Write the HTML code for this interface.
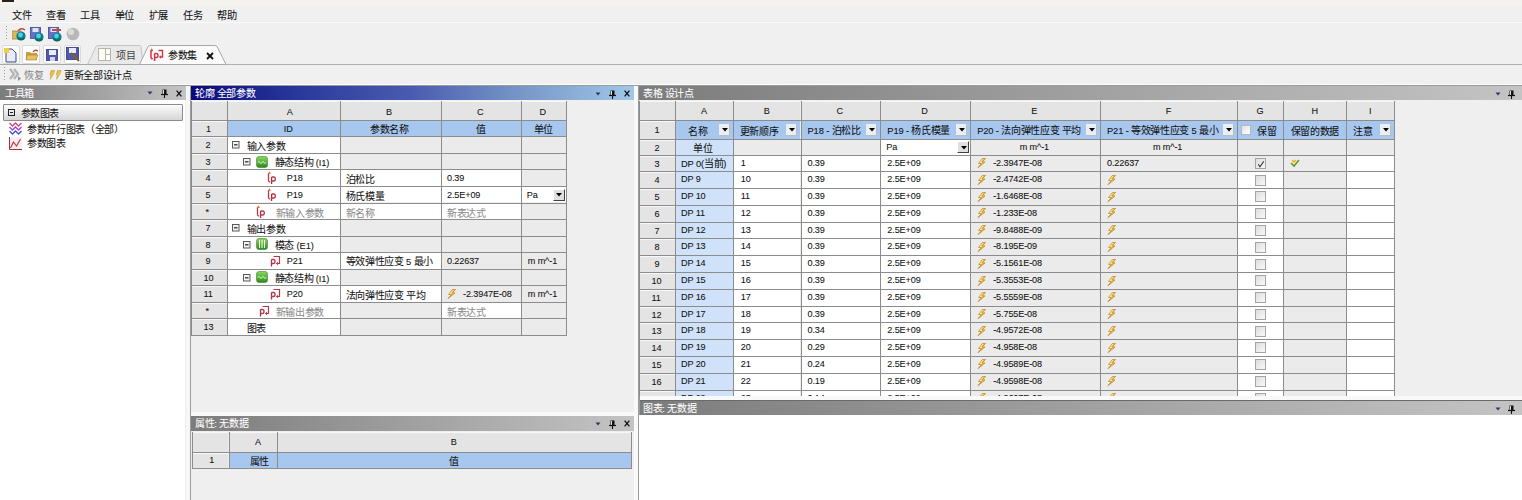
<!DOCTYPE html><html lang="zh-CN"><head><meta charset="utf-8"><style>
*{margin:0;padding:0;box-sizing:border-box}
html,body{width:1522px;height:500px;overflow:hidden}
body{position:relative;background:#f0f0f0;font-family:"Liberation Sans",sans-serif;font-size:9px;color:#111}
div{position:absolute}
.t{white-space:nowrap;line-height:12px;-webkit-text-stroke-width:0.08px}
.tw{-webkit-text-stroke:0}
.cap-a{background:linear-gradient(to right,#0a0a7c 0%,#2a3a9c 25%,#4a5cb0 50%,#7898c8 75%,#a0c8e8 100%)}
.cap-i{background:linear-gradient(to right,#7c7c7c,#c4c4c4)}
.c{overflow:hidden;white-space:nowrap;line-height:16px}
.hd{background:#e4e4e4;box-shadow:inset 0 1px 0 #f8f8f8}
.bl{background:#a7c7ef}
.lb{background:#cfe2f9}
.w{background:#fff}
.g{background:#ebebeb}
.gr{color:#888}
</style></head><body>
<div style="left:0px;top:0px;width:1522px;height:7px;background:linear-gradient(#f6f2ef 60%,#f0f0f0)"></div>
<div style="left:2px;top:0px;width:12px;height:1.6px;background:#2a2218"></div>
<div class="t" style="left:12.0px;top:9px;"><span style="font-size:10.2px;letter-spacing:-0.36px;position:relative;top:1px;-webkit-text-stroke-width:0.05px">文件</span></div>
<div class="t" style="left:46.2px;top:9px;"><span style="font-size:10.2px;letter-spacing:-0.36px;position:relative;top:1px;-webkit-text-stroke-width:0.05px">查看</span></div>
<div class="t" style="left:80.4px;top:9px;"><span style="font-size:10.2px;letter-spacing:-0.36px;position:relative;top:1px;-webkit-text-stroke-width:0.05px">工具</span></div>
<div class="t" style="left:114.60000000000001px;top:9px;"><span style="font-size:10.2px;letter-spacing:-0.36px;position:relative;top:1px;-webkit-text-stroke-width:0.05px">单位</span></div>
<div class="t" style="left:148.8px;top:9px;"><span style="font-size:10.2px;letter-spacing:-0.36px;position:relative;top:1px;-webkit-text-stroke-width:0.05px">扩展</span></div>
<div class="t" style="left:183.0px;top:9px;"><span style="font-size:10.2px;letter-spacing:-0.36px;position:relative;top:1px;-webkit-text-stroke-width:0.05px">任务</span></div>
<div class="t" style="left:217.20000000000002px;top:9px;"><span style="font-size:10.2px;letter-spacing:-0.36px;position:relative;top:1px;-webkit-text-stroke-width:0.05px">帮助</span></div>
<div style="left:0px;top:22px;width:1522px;height:1px;background:#fbfbfb"></div>
<div style="left:5.5px;top:26px;width:1px;height:1px;background:#9a9a9a"></div>
<div style="left:5.5px;top:29px;width:1px;height:1px;background:#9a9a9a"></div>
<div style="left:5.5px;top:32px;width:1px;height:1px;background:#9a9a9a"></div>
<div style="left:5.5px;top:35px;width:1px;height:1px;background:#9a9a9a"></div>
<div style="left:5.5px;top:38px;width:1px;height:1px;background:#9a9a9a"></div>
<svg style="position:absolute;left:12px;top:26.5px;" width="14" height="14" viewBox="0 0 14 14"><rect x="0" y="4" width="9" height="8" fill="#d8b860" stroke="#a08840" stroke-width="0.8"/><path d="M6 4q3-4 7-1" stroke="#c04848" stroke-width="1.5" fill="none"/><circle cx="9" cy="9" r="4.6" fill="#107a98"/><circle cx="8.5" cy="8" r="2.4" fill="#50d0d8"/><path d="M5.5 11.2q3.5 2.5 7 0" stroke="#0a6a3a" stroke-width="1.4" fill="none"/></svg>
<svg style="position:absolute;left:30px;top:27px;" width="14" height="15" viewBox="0 0 14 15"><rect x="0.5" y="0.5" width="10" height="11" fill="#6a70c8" stroke="#404890" stroke-width="0.8"/><rect x="2.5" y="1" width="6" height="4" fill="#e0e4f8"/><circle cx="9" cy="10" r="4.6" fill="#107a98"/><circle cx="8.5" cy="9" r="2.4" fill="#50d0d8"/><path d="M5.5 12.2q3.5 2.5 7 0" stroke="#0a6a3a" stroke-width="1.4" fill="none"/></svg>
<svg style="position:absolute;left:48px;top:27px;" width="14" height="15" viewBox="0 0 14 15"><rect x="0.5" y="0.5" width="10" height="11" fill="#6a70c8" stroke="#404890" stroke-width="0.8"/><rect x="2.5" y="1" width="6" height="4" fill="#e0e4f8"/><path d="M4 3h9" stroke="#c04848" stroke-width="2"/><circle cx="9" cy="10" r="4.6" fill="#107a98"/><circle cx="8.5" cy="9" r="2.4" fill="#50d0d8"/><path d="M5.5 12.2q3.5 2.5 7 0" stroke="#0a6a3a" stroke-width="1.4" fill="none"/></svg>
<svg style="position:absolute;left:66px;top:26.5px;" width="14" height="14" viewBox="0 0 14 14"><circle cx="7" cy="7" r="6.3" fill="#b8b8b8"/><circle cx="5" cy="5" r="3" fill="#dcdcdc"/></svg>
<div style="left:2px;top:44.5px;width:17.5px;height:19px;background:#fdfdfd;border:1px solid #dadada;border-radius:2px"></div>
<div style="left:22px;top:44.5px;width:17.5px;height:19px;background:#fdfdfd;border:1px solid #dadada;border-radius:2px"></div>
<div style="left:43px;top:44.5px;width:17.5px;height:19px;background:#fdfdfd;border:1px solid #dadada;border-radius:2px"></div>
<div style="left:63.6px;top:44.5px;width:17.5px;height:19px;background:#fdfdfd;border:1px solid #dadada;border-radius:2px"></div>
<svg style="position:absolute;left:4px;top:47.5px;" width="13" height="15" viewBox="0 0 13 15"><path d="M2 1h6l4 4v9H2z" fill="#e8ecf8" stroke="#404870" stroke-width="1"/><rect x="0" y="0" width="5" height="5" fill="#f0d040"/></svg>
<svg style="position:absolute;left:25px;top:49px;" width="14" height="12" viewBox="0 0 14 12"><path d="M1 3h4l1 1h6v7H1z" fill="#c8a040"/><path d="M2 6h11l-2 5H1z" fill="#e8c060" stroke="#a08030" stroke-width="0.6"/><path d="M8 3q2-3 5-1" stroke="#c04040" stroke-width="1.3" fill="none"/></svg>
<svg style="position:absolute;left:45.5px;top:48.5px;" width="12" height="12" viewBox="0 0 12 12"><rect x="0.5" y="0.5" width="11" height="11" fill="#5058b0" stroke="#303880" stroke-width="0.8"/><rect x="3" y="1" width="7" height="5" fill="#e8ecff"/><rect x="4" y="8" width="5" height="4" fill="#d0d4f0"/></svg>
<svg style="position:absolute;left:66px;top:47px;" width="14" height="15" viewBox="0 0 14 15"><rect x="0.5" y="0.5" width="12" height="12" fill="#5058b0" stroke="#303880" stroke-width="0.8"/><rect x="3" y="1" width="7" height="5" fill="#e8ecff"/><path d="M5 6l8 8" stroke="#806020" stroke-width="2"/></svg>
<svg style="position:absolute;left:84px;top:44px;" width="150" height="21" viewBox="0 0 150 21"><path d="M3.5 20.5L12 2.5q1-1 3-1H54q2 0 3 1L59 20.5" fill="#e9e9e9" stroke="#c4c4c4" stroke-width="1"/><path d="M55.5 20.5L64 2.5q1-1 3-1H130q2 0 3 1L142 20.5" fill="#fbfbfb" stroke="#a8a8a8" stroke-width="1"/></svg>
<svg style="position:absolute;left:98px;top:48px;" width="13" height="13" viewBox="0 0 13 13"><rect x="0.5" y="0.5" width="12" height="12" fill="#fdfdf8" stroke="#b8b4a8"/><path d="M7.5 0.5v12M7.5 6.5h5" stroke="#b8b4a8"/></svg>
<div class="t" style="left:116px;top:49px;color:#444"><span style="font-size:10px;letter-spacing:-0.35px;position:relative;top:1px;-webkit-text-stroke-width:0.05px">项目</span></div>
<svg style="position:absolute;left:148.5px;top:47.5px;" width="15" height="14" viewBox="0 0 15 14"><path d="M2 2.5V9Q2 10.8 3.8 10.8" stroke="#d03848" stroke-width="1.5" fill="none"/><path d="M2.8 0.3L0.8 3.2h3.6z" fill="#d05040"/><path d="M5.6 5.5V13" stroke="#c83040" stroke-width="1.5"/><path d="M5.6 5.5H7.4Q9 5.5 9 7.5Q9 9.5 7.4 9.5H5.6" stroke="#d03848" stroke-width="1.4" fill="none"/><path d="M9.5 2.5H13.5V9H11.5" stroke="#d03848" stroke-width="1.4" fill="none"/><path d="M12 7.2L9.8 9L12 10.8z" fill="#d03848"/></svg>
<div class="t" style="left:168px;top:49px;"><span style="font-size:10px;letter-spacing:-0.35px;position:relative;top:1px;-webkit-text-stroke-width:0.05px">参数集</span></div>
<svg style="position:absolute;left:206px;top:51.5px;" width="8" height="8" viewBox="0 0 8 8"><path d="M1 1L7 7M7 1L1 7" stroke="#111" stroke-width="1.8"/></svg>
<div style="left:0px;top:64px;width:1522px;height:1px;background:#a8a8a8"></div>
<div style="left:226px;top:63.5px;width:1296px;height:1px;background:#b0b0b0"></div>
<div style="left:3.5px;top:67px;width:1px;height:1px;background:#9a9a9a"></div>
<div style="left:3.5px;top:70px;width:1px;height:1px;background:#9a9a9a"></div>
<div style="left:3.5px;top:73px;width:1px;height:1px;background:#9a9a9a"></div>
<div style="left:3.5px;top:76px;width:1px;height:1px;background:#9a9a9a"></div>
<div style="left:3.5px;top:79px;width:1px;height:1px;background:#9a9a9a"></div>
<svg style="position:absolute;left:9px;top:68px;" width="14" height="14" viewBox="0 0 14 14"><path d="M1 1l4 5l-4 5M5 1l4 5l-4 5" stroke="#b4b4b4" stroke-width="2.2" fill="none"/><path d="M9 8l3 2.5l-3 2.5z" fill="#909090"/></svg>
<div class="t" style="left:24px;top:69px;color:#888"><span style="font-size:10px;letter-spacing:-0.35px;position:relative;top:1px;-webkit-text-stroke-width:0.05px">恢复</span></div>
<svg style="position:absolute;left:49px;top:69.5px;" width="14" height="10" viewBox="0 0 14 10"><path d="M2.2 0.3H5.6L4.2 4.6L1.2 9.3L1.8 4.8L0.9 4.6z" fill="#eec040" stroke="#b89030" stroke-width="0.5"/><path d="M8.6 0.3H12L10.6 4.6L7.6 9.3L8.2 4.8L7.3 4.6z" fill="#eec040" stroke="#b89030" stroke-width="0.5"/></svg>
<div class="t" style="left:64px;top:69px;"><span style="font-size:10px;letter-spacing:-0.35px;position:relative;top:1px;-webkit-text-stroke-width:0.05px">更新全部设计点</span></div>
<div style="left:0px;top:83.6px;width:1522px;height:1.4px;background:#fdfdfd"></div>
<div style="left:0px;top:85px;width:1522px;height:1.4px;background:#9a9a9a"></div>
<div class="cap-i" style="left:0;top:86.4px;width:185.7px;height:14px"></div>
<div class="t" style="left:5px;top:86.5px;color:#fff"><span style="font-size:10px;letter-spacing:-0.35px;position:relative;top:1px;-webkit-text-stroke-width:0.05px">工具箱</span></div>
<svg style="position:absolute;left:147px;top:91.0px;" width="6" height="4" viewBox="0 0 6 4"><path d="M0.5 0.5h5L3 3.5z" fill="#34346a"/></svg>
<svg style="position:absolute;left:161px;top:89.0px;" width="7" height="9" viewBox="0 0 7 9"><path d="M1.5 0.5h4v5h-4z" fill="#111"/><path d="M2.5 1v4" stroke="#fff" stroke-width="0.9"/><path d="M0 5.5h7" stroke="#111" stroke-width="1.2"/><path d="M3.5 6v3" stroke="#111" stroke-width="1.1"/></svg>
<svg style="position:absolute;left:176.4px;top:89.9px;" width="6" height="7" viewBox="0 0 6 7"><path d="M0.6 0.6L5.4 6.4M5.4 0.6L0.6 6.4" stroke="#111" stroke-width="1.3"/></svg>
<div style="left:0px;top:100px;width:185px;height:400px;background:#fff"></div>
<div style="left:185.7px;top:86.4px;width:4.5px;height:415px;background:#f7f7f7"></div>
<div style="left:190.2px;top:86.4px;width:1px;height:415px;background:#9c9c9c"></div>
<div style="left:3px;top:104.4px;width:180px;height:16.4px;background:linear-gradient(#fbfbfb,#d6d6d6);border:1px solid #8c8c8c;border-radius:1px"></div>
<svg style="position:absolute;left:8px;top:109px;" width="7" height="7" viewBox="0 0 7 7"><rect x="0.5" y="0.5" width="6" height="6" fill="none" stroke="#222"/><path d="M2 3.5h3" stroke="#222"/></svg>
<div class="t" style="left:20.5px;top:106.5px;"><span style="font-size:10px;letter-spacing:-0.35px;position:relative;top:1px;-webkit-text-stroke-width:0.05px">参数图表</span></div>
<svg style="position:absolute;left:9px;top:122px;" width="13" height="13" viewBox="0 0 13 13"><path d="M0.5 1l3 3l3-3l3 3l3-3" stroke="#e04070" stroke-width="1.3" fill="none"/><path d="M0.5 5l3 3l3-3l3 3l3-3" stroke="#a040d0" stroke-width="1.3" fill="none"/><path d="M0.5 9l3 3l3-3l3 3l3-3" stroke="#4050d0" stroke-width="1.3" fill="none"/></svg>
<div class="t" style="left:27px;top:122.5px;"><span style="font-size:10px;letter-spacing:-0.35px;position:relative;top:1px;-webkit-text-stroke-width:0.05px">参数并行图表（全部）</span></div>
<svg style="position:absolute;left:9px;top:137px;" width="13" height="13" viewBox="0 0 13 13"><rect x="0" y="0" width="13" height="13" fill="#fbeef0"/><path d="M0.5 0v12.5h12.5" stroke="#a03040" stroke-width="1" fill="none"/><path d="M1.5 11l3-6l3 4l4-7" stroke="#c03040" stroke-width="1.1" fill="none"/></svg>
<div class="t" style="left:27px;top:137px;"><span style="font-size:10px;letter-spacing:-0.35px;position:relative;top:1px;-webkit-text-stroke-width:0.05px">参数图表</span></div>
<div class="cap-a" style="left:191px;top:86.2px;width:442.6px;height:14.2px"></div>
<div class="t" style="left:195px;top:87px;color:#fff"><span style="font-size:10px;letter-spacing:-0.35px;position:relative;top:1px;-webkit-text-stroke-width:0.05px">轮廓</span><span style="font-size:9.3px;letter-spacing:-0.12px;position:relative;top:0px">&nbsp;</span><span style="font-size:10px;letter-spacing:-0.35px;position:relative;top:1px;-webkit-text-stroke-width:0.05px">全部参数</span></div>
<svg style="position:absolute;left:595px;top:91.5px;" width="6" height="4" viewBox="0 0 6 4"><path d="M0.5 0.5h5L3 3.5z" fill="#34346a"/></svg>
<svg style="position:absolute;left:609px;top:89.5px;" width="7" height="9" viewBox="0 0 7 9"><path d="M1.5 0.5h4v5h-4z" fill="#111"/><path d="M2.5 1v4" stroke="#fff" stroke-width="0.9"/><path d="M0 5.5h7" stroke="#111" stroke-width="1.2"/><path d="M3.5 6v3" stroke="#111" stroke-width="1.1"/></svg>
<svg style="position:absolute;left:624.4px;top:90.4px;" width="6" height="7" viewBox="0 0 6 7"><path d="M0.6 0.6L5.4 6.4M5.4 0.6L0.6 6.4" stroke="#111" stroke-width="1.3"/></svg>
<div style="left:191px;top:100.5px;width:443px;height:311.5px;background:#efefef"></div>
<div style="left:633.6px;top:86.4px;width:4.8px;height:415px;background:#f9f9f9"></div>
<div style="left:638.4px;top:86.4px;width:1.2px;height:415px;background:#9c9c9c"></div>
<div style="left:191px;top:412px;width:443px;height:4px;background:#f9f9f9"></div>
<div class="cap-i" style="left:191px;top:416px;width:443px;height:14.5px"></div>
<div class="t" style="left:195px;top:418px;color:#fff"><span style="font-size:10px;letter-spacing:-0.35px;position:relative;top:0px;-webkit-text-stroke-width:0.05px">属性</span><span style="font-size:9.3px;letter-spacing:-0.12px;position:relative;top:0px">: </span><span style="font-size:10px;letter-spacing:-0.35px;position:relative;top:0px;-webkit-text-stroke-width:0.05px">无数据</span></div>
<svg style="position:absolute;left:595px;top:421.5px;" width="6" height="4" viewBox="0 0 6 4"><path d="M0.5 0.5h5L3 3.5z" fill="#34346a"/></svg>
<svg style="position:absolute;left:609px;top:419.5px;" width="7" height="9" viewBox="0 0 7 9"><path d="M1.5 0.5h4v5h-4z" fill="#111"/><path d="M2.5 1v4" stroke="#fff" stroke-width="0.9"/><path d="M0 5.5h7" stroke="#111" stroke-width="1.2"/><path d="M3.5 6v3" stroke="#111" stroke-width="1.1"/></svg>
<svg style="position:absolute;left:624.4px;top:420.4px;" width="6" height="7" viewBox="0 0 6 7"><path d="M0.6 0.6L5.4 6.4M5.4 0.6L0.6 6.4" stroke="#111" stroke-width="1.3"/></svg>
<div style="left:191px;top:430.5px;width:443px;height:70px;background:#efefef"></div>
<div class="cap-i" style="left:639px;top:85.5px;width:883px;height:14.5px"></div>
<div class="t" style="left:643px;top:86.5px;color:#fff"><span style="font-size:10px;letter-spacing:-0.35px;position:relative;top:1px;-webkit-text-stroke-width:0.05px">表格</span><span style="font-size:9.3px;letter-spacing:-0.12px;position:relative;top:0px">&nbsp;</span><span style="font-size:10px;letter-spacing:-0.35px;position:relative;top:1px;-webkit-text-stroke-width:0.05px">设计点</span></div>
<svg style="position:absolute;left:1495px;top:92px;" width="6" height="4" viewBox="0 0 6 4"><path d="M0.5 0.5h5L3 3.5z" fill="#34346a"/></svg>
<svg style="position:absolute;left:1508px;top:89.5px;" width="7" height="9" viewBox="0 0 7 9"><path d="M1.5 0.5h4v5h-4z" fill="#111"/><path d="M2.5 1v4" stroke="#fff" stroke-width="0.9"/><path d="M0 5.5h7" stroke="#111" stroke-width="1.2"/><path d="M3.5 6v3" stroke="#111" stroke-width="1.1"/></svg>
<div style="left:639px;top:100px;width:883px;height:296px;background:#efefef"></div>
<div style="left:639.6px;top:396px;width:883px;height:3.6px;background:#f9f9f9"></div>
<div class="cap-i" style="left:639.6px;top:399.6px;width:883px;height:15.4px;border-top:1px solid #6a6a6a"></div>
<div class="t" style="left:643px;top:402.5px;color:#fff"><span style="font-size:10px;letter-spacing:-0.35px;position:relative;top:0px;-webkit-text-stroke-width:0.05px">图表</span><span style="font-size:9.3px;letter-spacing:-0.12px;position:relative;top:0px">: </span><span style="font-size:10px;letter-spacing:-0.35px;position:relative;top:0px;-webkit-text-stroke-width:0.05px">无数据</span></div>
<svg style="position:absolute;left:1495px;top:407px;" width="6" height="4" viewBox="0 0 6 4"><path d="M0.5 0.5h5L3 3.5z" fill="#34346a"/></svg>
<svg style="position:absolute;left:1508px;top:404.5px;" width="7" height="9" viewBox="0 0 7 9"><path d="M1.5 0.5h4v5h-4z" fill="#111"/><path d="M2.5 1v4" stroke="#fff" stroke-width="0.9"/><path d="M0 5.5h7" stroke="#111" stroke-width="1.2"/><path d="M3.5 6v3" stroke="#111" stroke-width="1.1"/></svg>
<div style="left:639px;top:415px;width:883px;height:85px;background:#fff"></div>
<div class="c hd" style="left:191.50px;top:100.50px;width:35.30px;height:19.40px;"><div class="t" style="left:0px;top:6.5px;"></div></div>
<div class="c hd" style="left:227.80px;top:100.50px;width:111.90px;height:19.40px;"><div class="t" style="left:59px;top:6.5px;"><span style="font-size:9.1px;letter-spacing:-0.12px;position:relative;top:-1px">A</span></div></div>
<div class="c hd" style="left:340.70px;top:100.50px;width:100.30px;height:19.40px;"><div class="t" style="left:45.4px;top:6.5px;"><span style="font-size:9.1px;letter-spacing:-0.12px;position:relative;top:-1px">B</span></div></div>
<div class="c hd" style="left:442.00px;top:100.50px;width:78.80px;height:19.40px;"><div class="t" style="left:35px;top:6.5px;"><span style="font-size:9.1px;letter-spacing:-0.12px;position:relative;top:-1px">C</span></div></div>
<div class="c hd" style="left:521.80px;top:100.50px;width:44.00px;height:19.40px;"><div class="t" style="left:17.6px;top:6.5px;"><span style="font-size:9.1px;letter-spacing:-0.12px;position:relative;top:-1px">D</span></div></div>
<div class="c hd" style="left:191.50px;top:120.90px;width:35.30px;height:15.52px;"><div class="t" style="left:14.5px;top:3px;"><span style="font-size:9.1px;letter-spacing:-0.12px;position:relative;top:-1px">1</span></div></div>
<div class="c bl" style="left:227.80px;top:120.90px;width:111.90px;height:15.52px;"><div class="t" style="left:56px;top:3.5px;"><span style="font-size:9.1px;letter-spacing:-0.12px;position:relative;top:-1px">ID</span></div></div>
<div class="c bl" style="left:340.70px;top:120.90px;width:100.30px;height:15.52px;"><div class="t" style="left:29.5px;top:2.5px;"><span style="font-size:10px;letter-spacing:-0.35px;position:relative;top:1px;-webkit-text-stroke-width:0.05px">参数名称</span></div></div>
<div class="c bl" style="left:442.00px;top:120.90px;width:78.80px;height:15.52px;"><div class="t" style="left:34px;top:2.5px;"><span style="font-size:10px;letter-spacing:-0.35px;position:relative;top:1px;-webkit-text-stroke-width:0.05px">值</span></div></div>
<div class="c bl" style="left:521.80px;top:120.90px;width:44.00px;height:15.52px;"><div class="t" style="left:12px;top:2.5px;"><span style="font-size:10px;letter-spacing:-0.35px;position:relative;top:1px;-webkit-text-stroke-width:0.05px">单位</span></div></div>
<div class="c hd" style="left:191.50px;top:137.42px;width:35.30px;height:15.52px;"><div class="t" style="left:14px;top:3px;"><span style="font-size:9.1px;letter-spacing:-0.12px;position:relative;top:-1px">2</span></div></div>
<div class="c w" style="left:227.80px;top:137.42px;width:111.90px;height:15.52px;"><svg style="position:absolute;left:4px;top:4px" width="8" height="8" viewBox="0 0 8 8"><rect x="0.5" y="0.5" width="6.5" height="6.5" fill="#f4f4f4" stroke="#585858"/><path d="M2 3.8h3.5" stroke="#303030" stroke-width="1.3"/></svg><div class="t" style="left:19px;top:3px;"><span style="font-size:10px;letter-spacing:-0.35px;position:relative;top:1px;-webkit-text-stroke-width:0.05px">输入参数</span></div></div>
<div class="c g" style="left:340.70px;top:137.42px;width:100.30px;height:15.52px;"></div>
<div class="c g" style="left:442.00px;top:137.42px;width:78.80px;height:15.52px;"></div>
<div class="c g" style="left:521.80px;top:137.42px;width:44.00px;height:15.52px;"></div>
<div class="c hd" style="left:191.50px;top:153.94px;width:35.30px;height:15.52px;"><div class="t" style="left:14px;top:3px;"><span style="font-size:9.1px;letter-spacing:-0.12px;position:relative;top:-1px">3</span></div></div>
<div class="c w" style="left:227.80px;top:153.94px;width:111.90px;height:15.52px;"><svg style="position:absolute;left:15px;top:4.3px" width="8" height="8" viewBox="0 0 8 8"><rect x="0.5" y="0.5" width="6.5" height="6.5" fill="#f4f4f4" stroke="#585858"/><path d="M2 3.8h3.5" stroke="#303030" stroke-width="1.3"/></svg><svg style="position:absolute;left:28.5px;top:1.6px" width="12" height="12" viewBox="0 0 12 12"><defs><linearGradient id="gg3" x1="0" y1="0" x2="0" y2="1"><stop offset="0" stop-color="#8ad860"/><stop offset="1" stop-color="#2a8a18"/></linearGradient></defs><rect x="0.5" y="0.5" width="11" height="11" rx="2.5" fill="url(#gg3)" stroke="#3a8a28" stroke-width="0.6"/><path d="M2 6.5q1-2 2 0t2 0t2 0t2 0" stroke="#fff" stroke-width="1" fill="none"/></svg><div class="t" style="left:47px;top:3px;"><span style="font-size:10px;letter-spacing:-0.35px;position:relative;top:0px;-webkit-text-stroke-width:0.05px">静态结构</span><span style="font-size:9.3px;letter-spacing:-0.12px;position:relative;top:0px"> (I1)</span></div></div>
<div class="c g" style="left:340.70px;top:153.94px;width:100.30px;height:15.52px;"></div>
<div class="c g" style="left:442.00px;top:153.94px;width:78.80px;height:15.52px;"></div>
<div class="c g" style="left:521.80px;top:153.94px;width:44.00px;height:15.52px;"></div>
<div class="c hd" style="left:191.50px;top:170.46px;width:35.30px;height:15.52px;"><div class="t" style="left:14px;top:3px;"><span style="font-size:9.1px;letter-spacing:-0.12px;position:relative;top:-1px">4</span></div></div>
<div class="c w" style="left:227.80px;top:170.46px;width:111.90px;height:15.52px;"><svg style="position:absolute;left:39.2px;top:1px" width="10" height="14" viewBox="0 0 10 14"><path d="M1.5 2.5V9.5Q1.5 11 3.2 11" stroke="#b83848" stroke-width="1.3" fill="none"/><path d="M2.5 0.2L0.6 3h3.2z" fill="#e07040"/><path d="M4.6 6V13" stroke="#a83040" stroke-width="1.3"/><path d="M4.6 6H6.6Q8.3 6 8.3 8Q8.3 10 6.6 10H4.6" stroke="#b83848" stroke-width="1.3" fill="none"/></svg><div class="t" style="left:59px;top:3px;"><span style="font-size:9.1px;letter-spacing:-0.12px;position:relative;top:-1px">P18</span></div></div>
<div class="c w" style="left:340.70px;top:170.46px;width:100.30px;height:15.52px;"><div class="t" style="left:5px;top:3px;"><span style="font-size:10px;letter-spacing:-0.35px;position:relative;top:1px;-webkit-text-stroke-width:0.05px">泊松比</span></div></div>
<div class="c w" style="left:442.00px;top:170.46px;width:78.80px;height:15.52px;"><div class="t" style="left:5px;top:3px;"><span style="font-size:9.1px;letter-spacing:-0.12px;position:relative;top:-1px">0.39</span></div></div>
<div class="c g" style="left:521.80px;top:170.46px;width:44.00px;height:15.52px;"></div>
<div class="c hd" style="left:191.50px;top:186.98px;width:35.30px;height:15.52px;"><div class="t" style="left:14px;top:3px;"><span style="font-size:9.1px;letter-spacing:-0.12px;position:relative;top:-1px">5</span></div></div>
<div class="c w" style="left:227.80px;top:186.98px;width:111.90px;height:15.52px;"><svg style="position:absolute;left:39.2px;top:1px" width="10" height="14" viewBox="0 0 10 14"><path d="M1.5 2.5V9.5Q1.5 11 3.2 11" stroke="#b83848" stroke-width="1.3" fill="none"/><path d="M2.5 0.2L0.6 3h3.2z" fill="#e07040"/><path d="M4.6 6V13" stroke="#a83040" stroke-width="1.3"/><path d="M4.6 6H6.6Q8.3 6 8.3 8Q8.3 10 6.6 10H4.6" stroke="#b83848" stroke-width="1.3" fill="none"/></svg><div class="t" style="left:59px;top:3px;"><span style="font-size:9.1px;letter-spacing:-0.12px;position:relative;top:-1px">P19</span></div></div>
<div class="c w" style="left:340.70px;top:186.98px;width:100.30px;height:15.52px;"><div class="t" style="left:5px;top:3px;"><span style="font-size:10px;letter-spacing:-0.35px;position:relative;top:1px;-webkit-text-stroke-width:0.05px">杨氏模量</span></div></div>
<div class="c w" style="left:442.00px;top:186.98px;width:78.80px;height:15.52px;"><div class="t" style="left:5px;top:3px;"><span style="font-size:9.1px;letter-spacing:-0.12px;position:relative;top:-1px">2.5E+09</span></div></div>
<div class="c w" style="left:521.80px;top:186.98px;width:44.00px;height:15.52px;"><div class="t" style="left:5px;top:3px;"><span style="font-size:9.1px;letter-spacing:-0.12px;position:relative;top:-1px">Pa</span></div><div style="right:1px;top:2px;width:12px;height:12px;background:#e0e0e0;border:1px solid #fff;border-right-color:#404040;border-bottom-color:#404040"><svg style="position:absolute;left:2.5px;top:3.5px" width="6" height="4" viewBox="0 0 6 4"><path d="M0 0h6L3 3.5z" fill="#000"/></svg></div></div>
<div class="c hd" style="left:191.50px;top:203.50px;width:35.30px;height:15.52px;"><div class="t" style="left:14px;top:3px;"><span style="font-size:9.1px;letter-spacing:-0.12px;position:relative;top:-1px">*</span></div></div>
<div class="c w" style="left:227.80px;top:203.50px;width:111.90px;height:15.52px;"><svg style="position:absolute;left:28px;top:1px" width="10" height="14" viewBox="0 0 10 14"><path d="M1.5 2.5V9.5Q1.5 11 3.2 11" stroke="#b83848" stroke-width="1.3" fill="none"/><path d="M2.5 0.2L0.6 3h3.2z" fill="#e07040"/><path d="M4.6 6V13" stroke="#a83040" stroke-width="1.3"/><path d="M4.6 6H6.6Q8.3 6 8.3 8Q8.3 10 6.6 10H4.6" stroke="#b83848" stroke-width="1.3" fill="none"/></svg><div class="t" style="left:48px;top:3px;color:#8a8a8a"><span style="font-size:10px;letter-spacing:-0.35px;position:relative;top:1px;-webkit-text-stroke-width:0.05px">新输入参数</span></div></div>
<div class="c w" style="left:340.70px;top:203.50px;width:100.30px;height:15.52px;"><div class="t" style="left:5px;top:3px;color:#8a8a8a"><span style="font-size:10px;letter-spacing:-0.35px;position:relative;top:1px;-webkit-text-stroke-width:0.05px">新名称</span></div></div>
<div class="c w" style="left:442.00px;top:203.50px;width:78.80px;height:15.52px;"><div class="t" style="left:5px;top:3px;color:#8a8a8a"><span style="font-size:10px;letter-spacing:-0.35px;position:relative;top:1px;-webkit-text-stroke-width:0.05px">新表达式</span></div></div>
<div class="c g" style="left:521.80px;top:203.50px;width:44.00px;height:15.52px;"></div>
<div class="c hd" style="left:191.50px;top:220.02px;width:35.30px;height:15.52px;"><div class="t" style="left:14px;top:3px;"><span style="font-size:9.1px;letter-spacing:-0.12px;position:relative;top:-1px">7</span></div></div>
<div class="c w" style="left:227.80px;top:220.02px;width:111.90px;height:15.52px;"><svg style="position:absolute;left:4px;top:4px" width="8" height="8" viewBox="0 0 8 8"><rect x="0.5" y="0.5" width="6.5" height="6.5" fill="#f4f4f4" stroke="#585858"/><path d="M2 3.8h3.5" stroke="#303030" stroke-width="1.3"/></svg><div class="t" style="left:19px;top:3px;"><span style="font-size:10px;letter-spacing:-0.35px;position:relative;top:1px;-webkit-text-stroke-width:0.05px">输出参数</span></div></div>
<div class="c g" style="left:340.70px;top:220.02px;width:100.30px;height:15.52px;"></div>
<div class="c g" style="left:442.00px;top:220.02px;width:78.80px;height:15.52px;"></div>
<div class="c g" style="left:521.80px;top:220.02px;width:44.00px;height:15.52px;"></div>
<div class="c hd" style="left:191.50px;top:236.54px;width:35.30px;height:15.52px;"><div class="t" style="left:14px;top:3px;"><span style="font-size:9.1px;letter-spacing:-0.12px;position:relative;top:-1px">8</span></div></div>
<div class="c w" style="left:227.80px;top:236.54px;width:111.90px;height:15.52px;"><svg style="position:absolute;left:15px;top:4.3px" width="8" height="8" viewBox="0 0 8 8"><rect x="0.5" y="0.5" width="6.5" height="6.5" fill="#f4f4f4" stroke="#585858"/><path d="M2 3.8h3.5" stroke="#303030" stroke-width="1.3"/></svg><svg style="position:absolute;left:28.5px;top:1.6px" width="12" height="12" viewBox="0 0 12 12"><defs><linearGradient id="gg9" x1="0" y1="0" x2="0" y2="1"><stop offset="0" stop-color="#8ad860"/><stop offset="1" stop-color="#2a8a18"/></linearGradient></defs><rect x="0.5" y="0.5" width="11" height="11" rx="2.5" fill="url(#gg9)" stroke="#3a8a28" stroke-width="0.6"/><path d="M3.5 2v8M6 2v8M8.5 2v8" stroke="#fff" stroke-width="1" fill="none"/></svg><div class="t" style="left:47px;top:3px;"><span style="font-size:10px;letter-spacing:-0.35px;position:relative;top:0px;-webkit-text-stroke-width:0.05px">模态</span><span style="font-size:9.3px;letter-spacing:-0.12px;position:relative;top:0px"> (E1)</span></div></div>
<div class="c g" style="left:340.70px;top:236.54px;width:100.30px;height:15.52px;"></div>
<div class="c g" style="left:442.00px;top:236.54px;width:78.80px;height:15.52px;"></div>
<div class="c g" style="left:521.80px;top:236.54px;width:44.00px;height:15.52px;"></div>
<div class="c hd" style="left:191.50px;top:253.06px;width:35.30px;height:15.52px;"><div class="t" style="left:14px;top:3px;"><span style="font-size:9.1px;letter-spacing:-0.12px;position:relative;top:-1px">9</span></div></div>
<div class="c w" style="left:227.80px;top:253.06px;width:111.90px;height:15.52px;"><svg style="position:absolute;left:42.2px;top:2px" width="11" height="12" viewBox="0 0 11 12"><path d="M1.5 4.5V11.5" stroke="#a83040" stroke-width="1.3"/><path d="M1.5 4.5H3.4Q5 4.5 5 6.5Q5 8.5 3.4 8.5H1.5" stroke="#b83848" stroke-width="1.3" fill="none"/><path d="M3.5 1.5H9.5V8.5H7.5" stroke="#b83848" stroke-width="1.2" fill="none"/><path d="M8 6.8L5.8 8.5L8 10.2z" fill="#b83848"/></svg><div class="t" style="left:59px;top:3px;"><span style="font-size:9.1px;letter-spacing:-0.12px;position:relative;top:-1px">P21</span></div></div>
<div class="c w" style="left:340.70px;top:253.06px;width:100.30px;height:15.52px;"><div class="t" style="left:5px;top:3px;"><span style="font-size:10px;letter-spacing:-0.35px;position:relative;top:0px;-webkit-text-stroke-width:0.05px">等效弹性应变</span><span style="font-size:9.3px;letter-spacing:-0.12px;position:relative;top:0px"> 5 </span><span style="font-size:10px;letter-spacing:-0.35px;position:relative;top:0px;-webkit-text-stroke-width:0.05px">最小</span></div></div>
<div class="c g" style="left:442.00px;top:253.06px;width:78.80px;height:15.52px;"><div class="t" style="left:5px;top:3px;"><span style="font-size:9.1px;letter-spacing:-0.12px;position:relative;top:-1px">0.22637</span></div></div>
<div class="c g" style="left:521.80px;top:253.06px;width:44.00px;height:15.52px;"><div class="t" style="left:6px;top:3px;"><span style="font-size:9.1px;letter-spacing:-0.12px;position:relative;top:-1px">m m^-1</span></div></div>
<div class="c hd" style="left:191.50px;top:269.58px;width:35.30px;height:15.52px;"><div class="t" style="left:12px;top:3px;"><span style="font-size:9.1px;letter-spacing:-0.12px;position:relative;top:-1px">10</span></div></div>
<div class="c w" style="left:227.80px;top:269.58px;width:111.90px;height:15.52px;"><svg style="position:absolute;left:15px;top:4.3px" width="8" height="8" viewBox="0 0 8 8"><rect x="0.5" y="0.5" width="6.5" height="6.5" fill="#f4f4f4" stroke="#585858"/><path d="M2 3.8h3.5" stroke="#303030" stroke-width="1.3"/></svg><svg style="position:absolute;left:28.5px;top:1.6px" width="12" height="12" viewBox="0 0 12 12"><defs><linearGradient id="gg12" x1="0" y1="0" x2="0" y2="1"><stop offset="0" stop-color="#8ad860"/><stop offset="1" stop-color="#2a8a18"/></linearGradient></defs><rect x="0.5" y="0.5" width="11" height="11" rx="2.5" fill="url(#gg12)" stroke="#3a8a28" stroke-width="0.6"/><path d="M2 6.5q1-2 2 0t2 0t2 0t2 0" stroke="#fff" stroke-width="1" fill="none"/></svg><div class="t" style="left:47px;top:3px;"><span style="font-size:10px;letter-spacing:-0.35px;position:relative;top:0px;-webkit-text-stroke-width:0.05px">静态结构</span><span style="font-size:9.3px;letter-spacing:-0.12px;position:relative;top:0px"> (I1)</span></div></div>
<div class="c g" style="left:340.70px;top:269.58px;width:100.30px;height:15.52px;"></div>
<div class="c g" style="left:442.00px;top:269.58px;width:78.80px;height:15.52px;"></div>
<div class="c g" style="left:521.80px;top:269.58px;width:44.00px;height:15.52px;"></div>
<div class="c hd" style="left:191.50px;top:286.10px;width:35.30px;height:15.52px;"><div class="t" style="left:12px;top:3px;"><span style="font-size:9.1px;letter-spacing:-0.12px;position:relative;top:-1px">11</span></div></div>
<div class="c w" style="left:227.80px;top:286.10px;width:111.90px;height:15.52px;"><svg style="position:absolute;left:42.2px;top:2px" width="11" height="12" viewBox="0 0 11 12"><path d="M1.5 4.5V11.5" stroke="#a83040" stroke-width="1.3"/><path d="M1.5 4.5H3.4Q5 4.5 5 6.5Q5 8.5 3.4 8.5H1.5" stroke="#b83848" stroke-width="1.3" fill="none"/><path d="M3.5 1.5H9.5V8.5H7.5" stroke="#b83848" stroke-width="1.2" fill="none"/><path d="M8 6.8L5.8 8.5L8 10.2z" fill="#b83848"/></svg><div class="t" style="left:59px;top:3px;"><span style="font-size:9.1px;letter-spacing:-0.12px;position:relative;top:-1px">P20</span></div></div>
<div class="c w" style="left:340.70px;top:286.10px;width:100.30px;height:15.52px;"><div class="t" style="left:5px;top:3px;"><span style="font-size:10px;letter-spacing:-0.35px;position:relative;top:1px;-webkit-text-stroke-width:0.05px">法向弹性应变</span><span style="font-size:9.3px;letter-spacing:-0.12px;position:relative;top:0px">&nbsp;</span><span style="font-size:10px;letter-spacing:-0.35px;position:relative;top:1px;-webkit-text-stroke-width:0.05px">平均</span></div></div>
<div class="c g" style="left:442.00px;top:286.10px;width:78.80px;height:15.52px;"><svg style="position:absolute;left:5px;top:2.5px" width="10" height="10" viewBox="0 0 10 10"><path d="M5.5 0.4L1.6 5.4h2.8L1 9.7l7-5.8H5.3L8.6 0.4z" fill="#f4c040" stroke="#b88020" stroke-width="0.7" stroke-linejoin="round"/><path d="M5.8 1.2L3 4.6h2" stroke="#fff0a0" stroke-width="0.8" fill="none"/></svg><div class="t" style="left:21px;top:3px;"><span style="font-size:9.1px;letter-spacing:-0.12px;position:relative;top:-1px">-2.3947E-08</span></div></div>
<div class="c g" style="left:521.80px;top:286.10px;width:44.00px;height:15.52px;"><div class="t" style="left:6px;top:3px;"><span style="font-size:9.1px;letter-spacing:-0.12px;position:relative;top:-1px">m m^-1</span></div></div>
<div class="c hd" style="left:191.50px;top:302.62px;width:35.30px;height:15.52px;"><div class="t" style="left:14px;top:3px;"><span style="font-size:9.1px;letter-spacing:-0.12px;position:relative;top:-1px">*</span></div></div>
<div class="c w" style="left:227.80px;top:302.62px;width:111.90px;height:15.52px;"><svg style="position:absolute;left:31px;top:2px" width="11" height="12" viewBox="0 0 11 12"><path d="M1.5 4.5V11.5" stroke="#a83040" stroke-width="1.3"/><path d="M1.5 4.5H3.4Q5 4.5 5 6.5Q5 8.5 3.4 8.5H1.5" stroke="#b83848" stroke-width="1.3" fill="none"/><path d="M3.5 1.5H9.5V8.5H7.5" stroke="#b83848" stroke-width="1.2" fill="none"/><path d="M8 6.8L5.8 8.5L8 10.2z" fill="#b83848"/></svg><div class="t" style="left:48px;top:3px;color:#8a8a8a"><span style="font-size:10px;letter-spacing:-0.35px;position:relative;top:1px;-webkit-text-stroke-width:0.05px">新输出参数</span></div></div>
<div class="c g" style="left:340.70px;top:302.62px;width:100.30px;height:15.52px;"></div>
<div class="c w" style="left:442.00px;top:302.62px;width:78.80px;height:15.52px;"><div class="t" style="left:5px;top:3px;color:#8a8a8a"><span style="font-size:10px;letter-spacing:-0.35px;position:relative;top:1px;-webkit-text-stroke-width:0.05px">新表达式</span></div></div>
<div class="c g" style="left:521.80px;top:302.62px;width:44.00px;height:15.52px;"></div>
<div class="c hd" style="left:191.50px;top:319.14px;width:35.30px;height:15.52px;"><div class="t" style="left:12px;top:3px;"><span style="font-size:9.1px;letter-spacing:-0.12px;position:relative;top:-1px">13</span></div></div>
<div class="c w" style="left:227.80px;top:319.14px;width:111.90px;height:15.52px;"><div class="t" style="left:19px;top:3px;"><span style="font-size:10px;letter-spacing:-0.35px;position:relative;top:1px;-webkit-text-stroke-width:0.05px">图表</span></div></div>
<div class="c g" style="left:340.70px;top:319.14px;width:100.30px;height:15.52px;"></div>
<div class="c g" style="left:442.00px;top:319.14px;width:78.80px;height:15.52px;"></div>
<div class="c g" style="left:521.80px;top:319.14px;width:44.00px;height:15.52px;"></div>
<div style="left:190.50px;top:100.50px;width:1px;height:235.16px;background:#8c8c8c"></div>
<div style="left:226.80px;top:100.50px;width:1px;height:235.16px;background:#8c8c8c"></div>
<div style="left:339.70px;top:100.50px;width:1px;height:235.16px;background:#8c8c8c"></div>
<div style="left:441.00px;top:100.50px;width:1px;height:235.16px;background:#8c8c8c"></div>
<div style="left:520.80px;top:100.50px;width:1px;height:235.16px;background:#8c8c8c"></div>
<div style="left:565.80px;top:100.50px;width:1px;height:235.16px;background:#8c8c8c"></div>
<div style="left:190.50px;top:119.90px;width:376.30px;height:1px;background:#8c8c8c"></div>
<div style="left:190.50px;top:136.42px;width:376.30px;height:1px;background:#8c8c8c"></div>
<div style="left:190.50px;top:152.94px;width:376.30px;height:1px;background:#8c8c8c"></div>
<div style="left:190.50px;top:169.46px;width:376.30px;height:1px;background:#8c8c8c"></div>
<div style="left:190.50px;top:185.98px;width:376.30px;height:1px;background:#8c8c8c"></div>
<div style="left:190.50px;top:202.50px;width:376.30px;height:1px;background:#8c8c8c"></div>
<div style="left:190.50px;top:219.02px;width:376.30px;height:1px;background:#8c8c8c"></div>
<div style="left:190.50px;top:235.54px;width:376.30px;height:1px;background:#8c8c8c"></div>
<div style="left:190.50px;top:252.06px;width:376.30px;height:1px;background:#8c8c8c"></div>
<div style="left:190.50px;top:268.58px;width:376.30px;height:1px;background:#8c8c8c"></div>
<div style="left:190.50px;top:285.10px;width:376.30px;height:1px;background:#8c8c8c"></div>
<div style="left:190.50px;top:301.62px;width:376.30px;height:1px;background:#8c8c8c"></div>
<div style="left:190.50px;top:318.14px;width:376.30px;height:1px;background:#8c8c8c"></div>
<div style="left:190.50px;top:334.66px;width:376.30px;height:1px;background:#8c8c8c"></div>
<div class="c hd" style="left:193.30px;top:431.50px;width:35.20px;height:20.50px;"></div>
<div class="c hd" style="left:229.50px;top:431.50px;width:47.30px;height:20.50px;"><div class="t" style="left:25.5px;top:5.5px;"><span style="font-size:9.1px;letter-spacing:-0.12px;position:relative;top:-1px">A</span></div></div>
<div class="c hd" style="left:277.80px;top:431.50px;width:353.00px;height:20.50px;"><div class="t" style="left:173px;top:5.5px;"><span style="font-size:9.1px;letter-spacing:-0.12px;position:relative;top:-1px">B</span></div></div>
<div class="c hd" style="left:193.30px;top:453.00px;width:35.20px;height:14.50px;"><div class="t" style="left:16px;top:2px;"><span style="font-size:9.1px;letter-spacing:-0.12px;position:relative;top:-1px">1</span></div></div>
<div class="c bl" style="left:229.50px;top:453.00px;width:47.30px;height:14.50px;"><div class="t" style="left:20px;top:1.5px;"><span style="font-size:10px;letter-spacing:-0.35px;position:relative;top:1px;-webkit-text-stroke-width:0.05px">属性</span></div></div>
<div class="c bl" style="left:277.80px;top:453.00px;width:353.00px;height:14.50px;"><div class="t" style="left:171px;top:1.5px;"><span style="font-size:10px;letter-spacing:-0.35px;position:relative;top:1px;-webkit-text-stroke-width:0.05px">值</span></div></div>
<div style="left:192.30px;top:431.50px;width:1px;height:37.00px;background:#8c8c8c"></div>
<div style="left:228.50px;top:431.50px;width:1px;height:37.00px;background:#8c8c8c"></div>
<div style="left:276.80px;top:431.50px;width:1px;height:37.00px;background:#8c8c8c"></div>
<div style="left:630.80px;top:431.50px;width:1px;height:37.00px;background:#8c8c8c"></div>
<div style="left:192.30px;top:452.00px;width:439.50px;height:1px;background:#8c8c8c"></div>
<div style="left:192.30px;top:467.50px;width:439.50px;height:1px;background:#8c8c8c"></div>
<div style="left:638px;top:100px;width:884px;height:296.2px;overflow:hidden">
<div class="c hd" style="left:1.50px;top:0.50px;width:35.50px;height:19.40px;"><div class="t" style="left:0px;top:5.5px;"></div></div>
<div class="c hd" style="left:38.00px;top:0.50px;width:56.80px;height:19.40px;"><div class="t" style="left:25px;top:5.5px;"><span style="font-size:9.1px;letter-spacing:-0.12px;position:relative;top:-1px">A</span></div></div>
<div class="c hd" style="left:95.80px;top:0.50px;width:66.70px;height:19.40px;"><div class="t" style="left:30px;top:5.5px;"><span style="font-size:9.1px;letter-spacing:-0.12px;position:relative;top:-1px">B</span></div></div>
<div class="c hd" style="left:163.50px;top:0.50px;width:78.80px;height:19.40px;"><div class="t" style="left:35px;top:5.5px;"><span style="font-size:9.1px;letter-spacing:-0.12px;position:relative;top:-1px">C</span></div></div>
<div class="c hd" style="left:243.30px;top:0.50px;width:88.90px;height:19.40px;"><div class="t" style="left:40px;top:5.5px;"><span style="font-size:9.1px;letter-spacing:-0.12px;position:relative;top:-1px">D</span></div></div>
<div class="c hd" style="left:333.20px;top:0.50px;width:128.80px;height:19.40px;"><div class="t" style="left:60px;top:5.5px;"><span style="font-size:9.1px;letter-spacing:-0.12px;position:relative;top:-1px">E</span></div></div>
<div class="c hd" style="left:463.00px;top:0.50px;width:136.10px;height:19.40px;"><div class="t" style="left:64.8px;top:5.5px;"><span style="font-size:9.1px;letter-spacing:-0.12px;position:relative;top:-1px">F</span></div></div>
<div class="c hd" style="left:600.10px;top:0.50px;width:44.70px;height:19.40px;"><div class="t" style="left:18.4px;top:5.5px;"><span style="font-size:9.1px;letter-spacing:-0.12px;position:relative;top:-1px">G</span></div></div>
<div class="c hd" style="left:645.80px;top:0.50px;width:62.30px;height:19.40px;"><div class="t" style="left:27.8px;top:5.5px;"><span style="font-size:9.1px;letter-spacing:-0.12px;position:relative;top:-1px">H</span></div></div>
<div class="c hd" style="left:709.10px;top:0.50px;width:47.10px;height:19.40px;"><div class="t" style="left:21.8px;top:5.5px;"><span style="font-size:9.1px;letter-spacing:-0.12px;position:relative;top:-1px">I</span></div></div>
<div class="c hd" style="left:1.50px;top:20.90px;width:35.50px;height:18.20px;"><div class="t" style="left:15px;top:4.5px;"><span style="font-size:9.1px;letter-spacing:-0.12px;position:relative;top:-1px">1</span></div></div>
<div class="c bl" style="left:38.00px;top:20.90px;width:56.80px;height:18.20px;"><div class="t" style="left:12px;top:4px;"><span style="font-size:10px;letter-spacing:-0.35px;position:relative;top:1px;-webkit-text-stroke-width:0.05px">名称</span></div><div style="right:3px;top:3.5px;width:11px;height:11.5px;background:#eceef2;box-shadow:inset -1px -1px 0 #b8bcc4"><svg style="position:absolute;left:3px;top:4px" width="6" height="4" viewBox="0 0 6 4"><path d="M0 0h6L3 3.5z" fill="#000"/></svg></div></div>
<div class="c bl" style="left:95.80px;top:20.90px;width:66.70px;height:18.20px;"><div class="t" style="left:6px;top:4px;"><span style="font-size:10px;letter-spacing:-0.35px;position:relative;top:1px;-webkit-text-stroke-width:0.05px">更新顺序</span></div><div style="right:3px;top:3.5px;width:11px;height:11.5px;background:#eceef2;box-shadow:inset -1px -1px 0 #b8bcc4"><svg style="position:absolute;left:3px;top:4px" width="6" height="4" viewBox="0 0 6 4"><path d="M0 0h6L3 3.5z" fill="#000"/></svg></div></div>
<div class="c bl" style="left:163.50px;top:20.90px;width:78.80px;height:18.20px;"><div class="t" style="left:6px;top:4px;"><span style="font-size:9.3px;letter-spacing:-0.12px;position:relative;top:0px">P18 - </span><span style="font-size:10px;letter-spacing:-0.35px;position:relative;top:0px;-webkit-text-stroke-width:0.05px">泊松比</span></div><div style="right:3px;top:3.5px;width:11px;height:11.5px;background:#eceef2;box-shadow:inset -1px -1px 0 #b8bcc4"><svg style="position:absolute;left:3px;top:4px" width="6" height="4" viewBox="0 0 6 4"><path d="M0 0h6L3 3.5z" fill="#000"/></svg></div></div>
<div class="c bl" style="left:243.30px;top:20.90px;width:88.90px;height:18.20px;"><div class="t" style="left:6px;top:4px;"><span style="font-size:9.3px;letter-spacing:-0.12px;position:relative;top:0px">P19 - </span><span style="font-size:10px;letter-spacing:-0.35px;position:relative;top:0px;-webkit-text-stroke-width:0.05px">杨氏模量</span></div><div style="right:3px;top:3.5px;width:11px;height:11.5px;background:#eceef2;box-shadow:inset -1px -1px 0 #b8bcc4"><svg style="position:absolute;left:3px;top:4px" width="6" height="4" viewBox="0 0 6 4"><path d="M0 0h6L3 3.5z" fill="#000"/></svg></div></div>
<div class="c bl" style="left:333.20px;top:20.90px;width:128.80px;height:18.20px;"><div class="t" style="left:6px;top:4px;"><span style="font-size:9.3px;letter-spacing:-0.12px;position:relative;top:0px">P20 - </span><span style="font-size:10px;letter-spacing:-0.35px;position:relative;top:0px;-webkit-text-stroke-width:0.05px">法向弹性应变</span><span style="font-size:9.3px;letter-spacing:-0.12px;position:relative;top:0px">&nbsp;</span><span style="font-size:10px;letter-spacing:-0.35px;position:relative;top:0px;-webkit-text-stroke-width:0.05px">平均</span></div><div style="right:3px;top:3.5px;width:11px;height:11.5px;background:#eceef2;box-shadow:inset -1px -1px 0 #b8bcc4"><svg style="position:absolute;left:3px;top:4px" width="6" height="4" viewBox="0 0 6 4"><path d="M0 0h6L3 3.5z" fill="#000"/></svg></div></div>
<div class="c bl" style="left:463.00px;top:20.90px;width:136.10px;height:18.20px;"><div class="t" style="left:6px;top:4px;"><span style="font-size:9.3px;letter-spacing:-0.12px;position:relative;top:0px">P21 - </span><span style="font-size:10px;letter-spacing:-0.35px;position:relative;top:0px;-webkit-text-stroke-width:0.05px">等效弹性应变</span><span style="font-size:9.3px;letter-spacing:-0.12px;position:relative;top:0px"> 5 </span><span style="font-size:10px;letter-spacing:-0.35px;position:relative;top:0px;-webkit-text-stroke-width:0.05px">最小</span></div><div style="right:3px;top:3.5px;width:11px;height:11.5px;background:#eceef2;box-shadow:inset -1px -1px 0 #b8bcc4"><svg style="position:absolute;left:3px;top:4px" width="6" height="4" viewBox="0 0 6 4"><path d="M0 0h6L3 3.5z" fill="#000"/></svg></div></div>
<div class="c bl" style="left:600.10px;top:20.90px;width:44.70px;height:18.20px;"><div class="t" style="left:18.8px;top:4px;"><span style="font-size:10px;letter-spacing:-0.35px;position:relative;top:1px;-webkit-text-stroke-width:0.05px">保留</span></div><div style="left:3px;top:4px;width:10px;height:10px;border:1px solid #b0b8c8;background:linear-gradient(135deg,#e8e0d8,#fff)"></div></div>
<div class="c bl" style="left:645.80px;top:20.90px;width:62.30px;height:18.20px;"><div class="t" style="left:6.8px;top:4px;"><span style="font-size:10px;letter-spacing:-0.35px;position:relative;top:1px;-webkit-text-stroke-width:0.05px">保留的数据</span></div></div>
<div class="c bl" style="left:709.10px;top:20.90px;width:47.10px;height:18.20px;"><div class="t" style="left:6px;top:4px;"><span style="font-size:10px;letter-spacing:-0.35px;position:relative;top:1px;-webkit-text-stroke-width:0.05px">注意</span></div><div style="right:3px;top:3.5px;width:11px;height:11.5px;background:#eceef2;box-shadow:inset -1px -1px 0 #b8bcc4"><svg style="position:absolute;left:3px;top:4px" width="6" height="4" viewBox="0 0 6 4"><path d="M0 0h6L3 3.5z" fill="#000"/></svg></div></div>
<div class="c hd" style="left:1.50px;top:40.10px;width:35.50px;height:14.80px;"><div class="t" style="left:15px;top:3px;"><span style="font-size:9.1px;letter-spacing:-0.12px;position:relative;top:-1px">2</span></div></div>
<div class="c lb" style="left:38.00px;top:40.10px;width:56.80px;height:14.80px;"><div class="t" style="left:17px;top:2px;"><span style="font-size:10px;letter-spacing:-0.35px;position:relative;top:1px;-webkit-text-stroke-width:0.05px">单位</span></div></div>
<div class="c g" style="left:95.80px;top:40.10px;width:66.70px;height:14.80px;"></div>
<div class="c g" style="left:163.50px;top:40.10px;width:78.80px;height:14.80px;"></div>
<div class="c w" style="left:243.30px;top:40.10px;width:88.90px;height:14.80px;"><div class="t" style="left:5px;top:2px;"><span style="font-size:9.1px;letter-spacing:-0.12px;position:relative;top:-1px">Pa</span></div><div style="right:1px;top:1px;width:12px;height:12px;background:#e0e0e0;border:1px solid #fff;border-right-color:#404040;border-bottom-color:#404040"><svg style="position:absolute;left:2.5px;top:3.5px" width="6" height="4" viewBox="0 0 6 4"><path d="M0 0h6L3 3.5z" fill="#000"/></svg></div></div>
<div class="c g" style="left:333.20px;top:40.10px;width:128.80px;height:14.80px;"><div class="t" style="left:48.5px;top:2px;letter-spacing:0.15px"><span style="font-size:9.1px;letter-spacing:-0.12px;position:relative;top:-1px">m m^-1</span></div></div>
<div class="c g" style="left:463.00px;top:40.10px;width:136.10px;height:14.80px;"><div class="t" style="left:52px;top:2px;letter-spacing:0.15px"><span style="font-size:9.1px;letter-spacing:-0.12px;position:relative;top:-1px">m m^-1</span></div></div>
<div class="c g" style="left:600.10px;top:40.10px;width:44.70px;height:14.80px;"></div>
<div class="c g" style="left:645.80px;top:40.10px;width:62.30px;height:14.80px;"></div>
<div class="c g" style="left:709.10px;top:40.10px;width:47.10px;height:14.80px;"></div>
<div class="c hd" style="left:1.50px;top:55.90px;width:35.50px;height:15.40px;"><div class="t" style="left:15px;top:3px;"><span style="font-size:9.1px;letter-spacing:-0.12px;position:relative;top:-1px">3</span></div></div>
<div class="c lb" style="left:38.00px;top:55.90px;width:56.80px;height:15.40px;"><div class="t" style="left:5px;top:2px;"><span style="font-size:9.3px;letter-spacing:-0.12px;position:relative;top:0px">DP 0(</span><span style="font-size:10px;letter-spacing:-0.35px;position:relative;top:0px;-webkit-text-stroke-width:0.05px">当前</span><span style="font-size:9.3px;letter-spacing:-0.12px;position:relative;top:0px">)</span></div></div>
<div class="c w" style="left:95.80px;top:55.90px;width:66.70px;height:15.40px;"><div class="t" style="left:7px;top:2px;"><span style="font-size:9.1px;letter-spacing:-0.12px;position:relative;top:-1px">1</span></div></div>
<div class="c w" style="left:163.50px;top:55.90px;width:78.80px;height:15.40px;"><div class="t" style="left:6px;top:2px;"><span style="font-size:9.1px;letter-spacing:-0.12px;position:relative;top:-1px">0.39</span></div></div>
<div class="c w" style="left:243.30px;top:55.90px;width:88.90px;height:15.40px;"><div class="t" style="left:6px;top:2px;"><span style="font-size:9.1px;letter-spacing:-0.12px;position:relative;top:-1px">2.5E+09</span></div></div>
<div class="c g" style="left:333.20px;top:55.90px;width:128.80px;height:15.40px;"><svg style="position:absolute;left:6px;top:2.5px" width="10" height="10" viewBox="0 0 10 10"><path d="M5.5 0.4L1.6 5.4h2.8L1 9.7l7-5.8H5.3L8.6 0.4z" fill="#f4c040" stroke="#b88020" stroke-width="0.7" stroke-linejoin="round"/><path d="M5.8 1.2L3 4.6h2" stroke="#fff0a0" stroke-width="0.8" fill="none"/></svg><div class="t" style="left:22px;top:2px;"><span style="font-size:9.1px;letter-spacing:-0.12px;position:relative;top:-1px">-2.3947E-08</span></div></div>
<div class="c g" style="left:463.00px;top:55.90px;width:136.10px;height:15.40px;"><div class="t" style="left:6px;top:2px;"><span style="font-size:9.1px;letter-spacing:-0.12px;position:relative;top:-1px">0.22637</span></div></div>
<div class="c g" style="left:600.10px;top:55.90px;width:44.70px;height:15.40px;"><div style="left:16.6px;top:2.3px;width:11px;height:11px;border:1px solid #a4a4a4;background:linear-gradient(135deg,#dcdcdc,#fafafa)"><svg style="position:absolute;left:1px;top:0.5px" width="8" height="8" viewBox="0 0 8 8"><path d="M1.2 4.2l1.8 2.6l3.8-5.6" stroke="#333" stroke-width="1.1" fill="none"/></svg></div></div>
<div class="c g" style="left:645.80px;top:55.90px;width:62.30px;height:15.40px;"><svg style="position:absolute;left:6px;top:3px" width="10" height="9" viewBox="0 0 10 9"><path d="M1 4l3 3l5-6" stroke="#6a9a20" stroke-width="1.6" fill="none"/><path d="M2 1l2 2l2-2" stroke="#f0b820" stroke-width="1.6" fill="none"/></svg></div>
<div class="c w" style="left:709.10px;top:55.90px;width:47.10px;height:15.40px;"></div>
<div class="c hd" style="left:1.50px;top:72.30px;width:35.50px;height:15.79px;"><div class="t" style="left:15px;top:3px;"><span style="font-size:9.1px;letter-spacing:-0.12px;position:relative;top:-1px">4</span></div></div>
<div class="c lb" style="left:38.00px;top:72.30px;width:56.80px;height:15.79px;"><div class="t" style="left:5px;top:2px;"><span style="font-size:9.1px;letter-spacing:-0.12px;position:relative;top:-1px">DP 9</span></div></div>
<div class="c w" style="left:95.80px;top:72.30px;width:66.70px;height:15.79px;"><div class="t" style="left:7px;top:2px;"><span style="font-size:9.1px;letter-spacing:-0.12px;position:relative;top:-1px">10</span></div></div>
<div class="c w" style="left:163.50px;top:72.30px;width:78.80px;height:15.79px;"><div class="t" style="left:6px;top:2px;"><span style="font-size:9.1px;letter-spacing:-0.12px;position:relative;top:-1px">0.39</span></div></div>
<div class="c w" style="left:243.30px;top:72.30px;width:88.90px;height:15.79px;"><div class="t" style="left:6px;top:2px;"><span style="font-size:9.1px;letter-spacing:-0.12px;position:relative;top:-1px">2.5E+09</span></div></div>
<div class="c g" style="left:333.20px;top:72.30px;width:128.80px;height:15.79px;"><svg style="position:absolute;left:6px;top:2.5px" width="10" height="10" viewBox="0 0 10 10"><path d="M5.5 0.4L1.6 5.4h2.8L1 9.7l7-5.8H5.3L8.6 0.4z" fill="#f4c040" stroke="#b88020" stroke-width="0.7" stroke-linejoin="round"/><path d="M5.8 1.2L3 4.6h2" stroke="#fff0a0" stroke-width="0.8" fill="none"/></svg><div class="t" style="left:22px;top:2px;"><span style="font-size:9.1px;letter-spacing:-0.12px;position:relative;top:-1px">-2.4742E-08</span></div></div>
<div class="c g" style="left:463.00px;top:72.30px;width:136.10px;height:15.79px;"><svg style="position:absolute;left:6px;top:2.5px" width="10" height="10" viewBox="0 0 10 10"><path d="M5.5 0.4L1.6 5.4h2.8L1 9.7l7-5.8H5.3L8.6 0.4z" fill="#f4c040" stroke="#b88020" stroke-width="0.7" stroke-linejoin="round"/><path d="M5.8 1.2L3 4.6h2" stroke="#fff0a0" stroke-width="0.8" fill="none"/></svg></div>
<div class="c w" style="left:600.10px;top:72.30px;width:44.70px;height:15.79px;"><div style="left:16.6px;top:2.3px;width:11px;height:11px;border:1px solid #a4a4a4;background:linear-gradient(135deg,#dcdcdc,#fafafa)"></div></div>
<div class="c g" style="left:645.80px;top:72.30px;width:62.30px;height:15.79px;"></div>
<div class="c w" style="left:709.10px;top:72.30px;width:47.10px;height:15.79px;"></div>
<div class="c hd" style="left:1.50px;top:89.09px;width:35.50px;height:15.79px;"><div class="t" style="left:15px;top:3px;"><span style="font-size:9.1px;letter-spacing:-0.12px;position:relative;top:-1px">5</span></div></div>
<div class="c lb" style="left:38.00px;top:89.09px;width:56.80px;height:15.79px;"><div class="t" style="left:5px;top:2px;"><span style="font-size:9.1px;letter-spacing:-0.12px;position:relative;top:-1px">DP 10</span></div></div>
<div class="c w" style="left:95.80px;top:89.09px;width:66.70px;height:15.79px;"><div class="t" style="left:7px;top:2px;"><span style="font-size:9.1px;letter-spacing:-0.12px;position:relative;top:-1px">11</span></div></div>
<div class="c w" style="left:163.50px;top:89.09px;width:78.80px;height:15.79px;"><div class="t" style="left:6px;top:2px;"><span style="font-size:9.1px;letter-spacing:-0.12px;position:relative;top:-1px">0.39</span></div></div>
<div class="c w" style="left:243.30px;top:89.09px;width:88.90px;height:15.79px;"><div class="t" style="left:6px;top:2px;"><span style="font-size:9.1px;letter-spacing:-0.12px;position:relative;top:-1px">2.5E+09</span></div></div>
<div class="c g" style="left:333.20px;top:89.09px;width:128.80px;height:15.79px;"><svg style="position:absolute;left:6px;top:2.5px" width="10" height="10" viewBox="0 0 10 10"><path d="M5.5 0.4L1.6 5.4h2.8L1 9.7l7-5.8H5.3L8.6 0.4z" fill="#f4c040" stroke="#b88020" stroke-width="0.7" stroke-linejoin="round"/><path d="M5.8 1.2L3 4.6h2" stroke="#fff0a0" stroke-width="0.8" fill="none"/></svg><div class="t" style="left:22px;top:2px;"><span style="font-size:9.1px;letter-spacing:-0.12px;position:relative;top:-1px">-1.6468E-08</span></div></div>
<div class="c g" style="left:463.00px;top:89.09px;width:136.10px;height:15.79px;"><svg style="position:absolute;left:6px;top:2.5px" width="10" height="10" viewBox="0 0 10 10"><path d="M5.5 0.4L1.6 5.4h2.8L1 9.7l7-5.8H5.3L8.6 0.4z" fill="#f4c040" stroke="#b88020" stroke-width="0.7" stroke-linejoin="round"/><path d="M5.8 1.2L3 4.6h2" stroke="#fff0a0" stroke-width="0.8" fill="none"/></svg></div>
<div class="c w" style="left:600.10px;top:89.09px;width:44.70px;height:15.79px;"><div style="left:16.6px;top:2.3px;width:11px;height:11px;border:1px solid #a4a4a4;background:linear-gradient(135deg,#dcdcdc,#fafafa)"></div></div>
<div class="c g" style="left:645.80px;top:89.09px;width:62.30px;height:15.79px;"></div>
<div class="c w" style="left:709.10px;top:89.09px;width:47.10px;height:15.79px;"></div>
<div class="c hd" style="left:1.50px;top:105.88px;width:35.50px;height:15.79px;"><div class="t" style="left:15px;top:3px;"><span style="font-size:9.1px;letter-spacing:-0.12px;position:relative;top:-1px">6</span></div></div>
<div class="c lb" style="left:38.00px;top:105.88px;width:56.80px;height:15.79px;"><div class="t" style="left:5px;top:2px;"><span style="font-size:9.1px;letter-spacing:-0.12px;position:relative;top:-1px">DP 11</span></div></div>
<div class="c w" style="left:95.80px;top:105.88px;width:66.70px;height:15.79px;"><div class="t" style="left:7px;top:2px;"><span style="font-size:9.1px;letter-spacing:-0.12px;position:relative;top:-1px">12</span></div></div>
<div class="c w" style="left:163.50px;top:105.88px;width:78.80px;height:15.79px;"><div class="t" style="left:6px;top:2px;"><span style="font-size:9.1px;letter-spacing:-0.12px;position:relative;top:-1px">0.39</span></div></div>
<div class="c w" style="left:243.30px;top:105.88px;width:88.90px;height:15.79px;"><div class="t" style="left:6px;top:2px;"><span style="font-size:9.1px;letter-spacing:-0.12px;position:relative;top:-1px">2.5E+09</span></div></div>
<div class="c g" style="left:333.20px;top:105.88px;width:128.80px;height:15.79px;"><svg style="position:absolute;left:6px;top:2.5px" width="10" height="10" viewBox="0 0 10 10"><path d="M5.5 0.4L1.6 5.4h2.8L1 9.7l7-5.8H5.3L8.6 0.4z" fill="#f4c040" stroke="#b88020" stroke-width="0.7" stroke-linejoin="round"/><path d="M5.8 1.2L3 4.6h2" stroke="#fff0a0" stroke-width="0.8" fill="none"/></svg><div class="t" style="left:22px;top:2px;"><span style="font-size:9.1px;letter-spacing:-0.12px;position:relative;top:-1px">-1.233E-08</span></div></div>
<div class="c g" style="left:463.00px;top:105.88px;width:136.10px;height:15.79px;"><svg style="position:absolute;left:6px;top:2.5px" width="10" height="10" viewBox="0 0 10 10"><path d="M5.5 0.4L1.6 5.4h2.8L1 9.7l7-5.8H5.3L8.6 0.4z" fill="#f4c040" stroke="#b88020" stroke-width="0.7" stroke-linejoin="round"/><path d="M5.8 1.2L3 4.6h2" stroke="#fff0a0" stroke-width="0.8" fill="none"/></svg></div>
<div class="c w" style="left:600.10px;top:105.88px;width:44.70px;height:15.79px;"><div style="left:16.6px;top:2.3px;width:11px;height:11px;border:1px solid #a4a4a4;background:linear-gradient(135deg,#dcdcdc,#fafafa)"></div></div>
<div class="c g" style="left:645.80px;top:105.88px;width:62.30px;height:15.79px;"></div>
<div class="c w" style="left:709.10px;top:105.88px;width:47.10px;height:15.79px;"></div>
<div class="c hd" style="left:1.50px;top:122.67px;width:35.50px;height:15.79px;"><div class="t" style="left:15px;top:3px;"><span style="font-size:9.1px;letter-spacing:-0.12px;position:relative;top:-1px">7</span></div></div>
<div class="c lb" style="left:38.00px;top:122.67px;width:56.80px;height:15.79px;"><div class="t" style="left:5px;top:2px;"><span style="font-size:9.1px;letter-spacing:-0.12px;position:relative;top:-1px">DP 12</span></div></div>
<div class="c w" style="left:95.80px;top:122.67px;width:66.70px;height:15.79px;"><div class="t" style="left:7px;top:2px;"><span style="font-size:9.1px;letter-spacing:-0.12px;position:relative;top:-1px">13</span></div></div>
<div class="c w" style="left:163.50px;top:122.67px;width:78.80px;height:15.79px;"><div class="t" style="left:6px;top:2px;"><span style="font-size:9.1px;letter-spacing:-0.12px;position:relative;top:-1px">0.39</span></div></div>
<div class="c w" style="left:243.30px;top:122.67px;width:88.90px;height:15.79px;"><div class="t" style="left:6px;top:2px;"><span style="font-size:9.1px;letter-spacing:-0.12px;position:relative;top:-1px">2.5E+09</span></div></div>
<div class="c g" style="left:333.20px;top:122.67px;width:128.80px;height:15.79px;"><svg style="position:absolute;left:6px;top:2.5px" width="10" height="10" viewBox="0 0 10 10"><path d="M5.5 0.4L1.6 5.4h2.8L1 9.7l7-5.8H5.3L8.6 0.4z" fill="#f4c040" stroke="#b88020" stroke-width="0.7" stroke-linejoin="round"/><path d="M5.8 1.2L3 4.6h2" stroke="#fff0a0" stroke-width="0.8" fill="none"/></svg><div class="t" style="left:22px;top:2px;"><span style="font-size:9.1px;letter-spacing:-0.12px;position:relative;top:-1px">-9.8488E-09</span></div></div>
<div class="c g" style="left:463.00px;top:122.67px;width:136.10px;height:15.79px;"><svg style="position:absolute;left:6px;top:2.5px" width="10" height="10" viewBox="0 0 10 10"><path d="M5.5 0.4L1.6 5.4h2.8L1 9.7l7-5.8H5.3L8.6 0.4z" fill="#f4c040" stroke="#b88020" stroke-width="0.7" stroke-linejoin="round"/><path d="M5.8 1.2L3 4.6h2" stroke="#fff0a0" stroke-width="0.8" fill="none"/></svg></div>
<div class="c w" style="left:600.10px;top:122.67px;width:44.70px;height:15.79px;"><div style="left:16.6px;top:2.3px;width:11px;height:11px;border:1px solid #a4a4a4;background:linear-gradient(135deg,#dcdcdc,#fafafa)"></div></div>
<div class="c g" style="left:645.80px;top:122.67px;width:62.30px;height:15.79px;"></div>
<div class="c w" style="left:709.10px;top:122.67px;width:47.10px;height:15.79px;"></div>
<div class="c hd" style="left:1.50px;top:139.46px;width:35.50px;height:15.79px;"><div class="t" style="left:15px;top:3px;"><span style="font-size:9.1px;letter-spacing:-0.12px;position:relative;top:-1px">8</span></div></div>
<div class="c lb" style="left:38.00px;top:139.46px;width:56.80px;height:15.79px;"><div class="t" style="left:5px;top:2px;"><span style="font-size:9.1px;letter-spacing:-0.12px;position:relative;top:-1px">DP 13</span></div></div>
<div class="c w" style="left:95.80px;top:139.46px;width:66.70px;height:15.79px;"><div class="t" style="left:7px;top:2px;"><span style="font-size:9.1px;letter-spacing:-0.12px;position:relative;top:-1px">14</span></div></div>
<div class="c w" style="left:163.50px;top:139.46px;width:78.80px;height:15.79px;"><div class="t" style="left:6px;top:2px;"><span style="font-size:9.1px;letter-spacing:-0.12px;position:relative;top:-1px">0.39</span></div></div>
<div class="c w" style="left:243.30px;top:139.46px;width:88.90px;height:15.79px;"><div class="t" style="left:6px;top:2px;"><span style="font-size:9.1px;letter-spacing:-0.12px;position:relative;top:-1px">2.5E+09</span></div></div>
<div class="c g" style="left:333.20px;top:139.46px;width:128.80px;height:15.79px;"><svg style="position:absolute;left:6px;top:2.5px" width="10" height="10" viewBox="0 0 10 10"><path d="M5.5 0.4L1.6 5.4h2.8L1 9.7l7-5.8H5.3L8.6 0.4z" fill="#f4c040" stroke="#b88020" stroke-width="0.7" stroke-linejoin="round"/><path d="M5.8 1.2L3 4.6h2" stroke="#fff0a0" stroke-width="0.8" fill="none"/></svg><div class="t" style="left:22px;top:2px;"><span style="font-size:9.1px;letter-spacing:-0.12px;position:relative;top:-1px">-8.195E-09</span></div></div>
<div class="c g" style="left:463.00px;top:139.46px;width:136.10px;height:15.79px;"><svg style="position:absolute;left:6px;top:2.5px" width="10" height="10" viewBox="0 0 10 10"><path d="M5.5 0.4L1.6 5.4h2.8L1 9.7l7-5.8H5.3L8.6 0.4z" fill="#f4c040" stroke="#b88020" stroke-width="0.7" stroke-linejoin="round"/><path d="M5.8 1.2L3 4.6h2" stroke="#fff0a0" stroke-width="0.8" fill="none"/></svg></div>
<div class="c w" style="left:600.10px;top:139.46px;width:44.70px;height:15.79px;"><div style="left:16.6px;top:2.3px;width:11px;height:11px;border:1px solid #a4a4a4;background:linear-gradient(135deg,#dcdcdc,#fafafa)"></div></div>
<div class="c g" style="left:645.80px;top:139.46px;width:62.30px;height:15.79px;"></div>
<div class="c w" style="left:709.10px;top:139.46px;width:47.10px;height:15.79px;"></div>
<div class="c hd" style="left:1.50px;top:156.25px;width:35.50px;height:15.79px;"><div class="t" style="left:15px;top:3px;"><span style="font-size:9.1px;letter-spacing:-0.12px;position:relative;top:-1px">9</span></div></div>
<div class="c lb" style="left:38.00px;top:156.25px;width:56.80px;height:15.79px;"><div class="t" style="left:5px;top:2px;"><span style="font-size:9.1px;letter-spacing:-0.12px;position:relative;top:-1px">DP 14</span></div></div>
<div class="c w" style="left:95.80px;top:156.25px;width:66.70px;height:15.79px;"><div class="t" style="left:7px;top:2px;"><span style="font-size:9.1px;letter-spacing:-0.12px;position:relative;top:-1px">15</span></div></div>
<div class="c w" style="left:163.50px;top:156.25px;width:78.80px;height:15.79px;"><div class="t" style="left:6px;top:2px;"><span style="font-size:9.1px;letter-spacing:-0.12px;position:relative;top:-1px">0.39</span></div></div>
<div class="c w" style="left:243.30px;top:156.25px;width:88.90px;height:15.79px;"><div class="t" style="left:6px;top:2px;"><span style="font-size:9.1px;letter-spacing:-0.12px;position:relative;top:-1px">2.5E+09</span></div></div>
<div class="c g" style="left:333.20px;top:156.25px;width:128.80px;height:15.79px;"><svg style="position:absolute;left:6px;top:2.5px" width="10" height="10" viewBox="0 0 10 10"><path d="M5.5 0.4L1.6 5.4h2.8L1 9.7l7-5.8H5.3L8.6 0.4z" fill="#f4c040" stroke="#b88020" stroke-width="0.7" stroke-linejoin="round"/><path d="M5.8 1.2L3 4.6h2" stroke="#fff0a0" stroke-width="0.8" fill="none"/></svg><div class="t" style="left:22px;top:2px;"><span style="font-size:9.1px;letter-spacing:-0.12px;position:relative;top:-1px">-5.1561E-08</span></div></div>
<div class="c g" style="left:463.00px;top:156.25px;width:136.10px;height:15.79px;"><svg style="position:absolute;left:6px;top:2.5px" width="10" height="10" viewBox="0 0 10 10"><path d="M5.5 0.4L1.6 5.4h2.8L1 9.7l7-5.8H5.3L8.6 0.4z" fill="#f4c040" stroke="#b88020" stroke-width="0.7" stroke-linejoin="round"/><path d="M5.8 1.2L3 4.6h2" stroke="#fff0a0" stroke-width="0.8" fill="none"/></svg></div>
<div class="c w" style="left:600.10px;top:156.25px;width:44.70px;height:15.79px;"><div style="left:16.6px;top:2.3px;width:11px;height:11px;border:1px solid #a4a4a4;background:linear-gradient(135deg,#dcdcdc,#fafafa)"></div></div>
<div class="c g" style="left:645.80px;top:156.25px;width:62.30px;height:15.79px;"></div>
<div class="c w" style="left:709.10px;top:156.25px;width:47.10px;height:15.79px;"></div>
<div class="c hd" style="left:1.50px;top:173.04px;width:35.50px;height:15.79px;"><div class="t" style="left:12px;top:3px;"><span style="font-size:9.1px;letter-spacing:-0.12px;position:relative;top:-1px">10</span></div></div>
<div class="c lb" style="left:38.00px;top:173.04px;width:56.80px;height:15.79px;"><div class="t" style="left:5px;top:2px;"><span style="font-size:9.1px;letter-spacing:-0.12px;position:relative;top:-1px">DP 15</span></div></div>
<div class="c w" style="left:95.80px;top:173.04px;width:66.70px;height:15.79px;"><div class="t" style="left:7px;top:2px;"><span style="font-size:9.1px;letter-spacing:-0.12px;position:relative;top:-1px">16</span></div></div>
<div class="c w" style="left:163.50px;top:173.04px;width:78.80px;height:15.79px;"><div class="t" style="left:6px;top:2px;"><span style="font-size:9.1px;letter-spacing:-0.12px;position:relative;top:-1px">0.39</span></div></div>
<div class="c w" style="left:243.30px;top:173.04px;width:88.90px;height:15.79px;"><div class="t" style="left:6px;top:2px;"><span style="font-size:9.1px;letter-spacing:-0.12px;position:relative;top:-1px">2.5E+09</span></div></div>
<div class="c g" style="left:333.20px;top:173.04px;width:128.80px;height:15.79px;"><svg style="position:absolute;left:6px;top:2.5px" width="10" height="10" viewBox="0 0 10 10"><path d="M5.5 0.4L1.6 5.4h2.8L1 9.7l7-5.8H5.3L8.6 0.4z" fill="#f4c040" stroke="#b88020" stroke-width="0.7" stroke-linejoin="round"/><path d="M5.8 1.2L3 4.6h2" stroke="#fff0a0" stroke-width="0.8" fill="none"/></svg><div class="t" style="left:22px;top:2px;"><span style="font-size:9.1px;letter-spacing:-0.12px;position:relative;top:-1px">-5.3553E-08</span></div></div>
<div class="c g" style="left:463.00px;top:173.04px;width:136.10px;height:15.79px;"><svg style="position:absolute;left:6px;top:2.5px" width="10" height="10" viewBox="0 0 10 10"><path d="M5.5 0.4L1.6 5.4h2.8L1 9.7l7-5.8H5.3L8.6 0.4z" fill="#f4c040" stroke="#b88020" stroke-width="0.7" stroke-linejoin="round"/><path d="M5.8 1.2L3 4.6h2" stroke="#fff0a0" stroke-width="0.8" fill="none"/></svg></div>
<div class="c w" style="left:600.10px;top:173.04px;width:44.70px;height:15.79px;"><div style="left:16.6px;top:2.3px;width:11px;height:11px;border:1px solid #a4a4a4;background:linear-gradient(135deg,#dcdcdc,#fafafa)"></div></div>
<div class="c g" style="left:645.80px;top:173.04px;width:62.30px;height:15.79px;"></div>
<div class="c w" style="left:709.10px;top:173.04px;width:47.10px;height:15.79px;"></div>
<div class="c hd" style="left:1.50px;top:189.83px;width:35.50px;height:15.79px;"><div class="t" style="left:12px;top:3px;"><span style="font-size:9.1px;letter-spacing:-0.12px;position:relative;top:-1px">11</span></div></div>
<div class="c lb" style="left:38.00px;top:189.83px;width:56.80px;height:15.79px;"><div class="t" style="left:5px;top:2px;"><span style="font-size:9.1px;letter-spacing:-0.12px;position:relative;top:-1px">DP 16</span></div></div>
<div class="c w" style="left:95.80px;top:189.83px;width:66.70px;height:15.79px;"><div class="t" style="left:7px;top:2px;"><span style="font-size:9.1px;letter-spacing:-0.12px;position:relative;top:-1px">17</span></div></div>
<div class="c w" style="left:163.50px;top:189.83px;width:78.80px;height:15.79px;"><div class="t" style="left:6px;top:2px;"><span style="font-size:9.1px;letter-spacing:-0.12px;position:relative;top:-1px">0.39</span></div></div>
<div class="c w" style="left:243.30px;top:189.83px;width:88.90px;height:15.79px;"><div class="t" style="left:6px;top:2px;"><span style="font-size:9.1px;letter-spacing:-0.12px;position:relative;top:-1px">2.5E+09</span></div></div>
<div class="c g" style="left:333.20px;top:189.83px;width:128.80px;height:15.79px;"><svg style="position:absolute;left:6px;top:2.5px" width="10" height="10" viewBox="0 0 10 10"><path d="M5.5 0.4L1.6 5.4h2.8L1 9.7l7-5.8H5.3L8.6 0.4z" fill="#f4c040" stroke="#b88020" stroke-width="0.7" stroke-linejoin="round"/><path d="M5.8 1.2L3 4.6h2" stroke="#fff0a0" stroke-width="0.8" fill="none"/></svg><div class="t" style="left:22px;top:2px;"><span style="font-size:9.1px;letter-spacing:-0.12px;position:relative;top:-1px">-5.5559E-08</span></div></div>
<div class="c g" style="left:463.00px;top:189.83px;width:136.10px;height:15.79px;"><svg style="position:absolute;left:6px;top:2.5px" width="10" height="10" viewBox="0 0 10 10"><path d="M5.5 0.4L1.6 5.4h2.8L1 9.7l7-5.8H5.3L8.6 0.4z" fill="#f4c040" stroke="#b88020" stroke-width="0.7" stroke-linejoin="round"/><path d="M5.8 1.2L3 4.6h2" stroke="#fff0a0" stroke-width="0.8" fill="none"/></svg></div>
<div class="c w" style="left:600.10px;top:189.83px;width:44.70px;height:15.79px;"><div style="left:16.6px;top:2.3px;width:11px;height:11px;border:1px solid #a4a4a4;background:linear-gradient(135deg,#dcdcdc,#fafafa)"></div></div>
<div class="c g" style="left:645.80px;top:189.83px;width:62.30px;height:15.79px;"></div>
<div class="c w" style="left:709.10px;top:189.83px;width:47.10px;height:15.79px;"></div>
<div class="c hd" style="left:1.50px;top:206.62px;width:35.50px;height:15.79px;"><div class="t" style="left:12px;top:3px;"><span style="font-size:9.1px;letter-spacing:-0.12px;position:relative;top:-1px">12</span></div></div>
<div class="c lb" style="left:38.00px;top:206.62px;width:56.80px;height:15.79px;"><div class="t" style="left:5px;top:2px;"><span style="font-size:9.1px;letter-spacing:-0.12px;position:relative;top:-1px">DP 17</span></div></div>
<div class="c w" style="left:95.80px;top:206.62px;width:66.70px;height:15.79px;"><div class="t" style="left:7px;top:2px;"><span style="font-size:9.1px;letter-spacing:-0.12px;position:relative;top:-1px">18</span></div></div>
<div class="c w" style="left:163.50px;top:206.62px;width:78.80px;height:15.79px;"><div class="t" style="left:6px;top:2px;"><span style="font-size:9.1px;letter-spacing:-0.12px;position:relative;top:-1px">0.39</span></div></div>
<div class="c w" style="left:243.30px;top:206.62px;width:88.90px;height:15.79px;"><div class="t" style="left:6px;top:2px;"><span style="font-size:9.1px;letter-spacing:-0.12px;position:relative;top:-1px">2.5E+09</span></div></div>
<div class="c g" style="left:333.20px;top:206.62px;width:128.80px;height:15.79px;"><svg style="position:absolute;left:6px;top:2.5px" width="10" height="10" viewBox="0 0 10 10"><path d="M5.5 0.4L1.6 5.4h2.8L1 9.7l7-5.8H5.3L8.6 0.4z" fill="#f4c040" stroke="#b88020" stroke-width="0.7" stroke-linejoin="round"/><path d="M5.8 1.2L3 4.6h2" stroke="#fff0a0" stroke-width="0.8" fill="none"/></svg><div class="t" style="left:22px;top:2px;"><span style="font-size:9.1px;letter-spacing:-0.12px;position:relative;top:-1px">-5.755E-08</span></div></div>
<div class="c g" style="left:463.00px;top:206.62px;width:136.10px;height:15.79px;"><svg style="position:absolute;left:6px;top:2.5px" width="10" height="10" viewBox="0 0 10 10"><path d="M5.5 0.4L1.6 5.4h2.8L1 9.7l7-5.8H5.3L8.6 0.4z" fill="#f4c040" stroke="#b88020" stroke-width="0.7" stroke-linejoin="round"/><path d="M5.8 1.2L3 4.6h2" stroke="#fff0a0" stroke-width="0.8" fill="none"/></svg></div>
<div class="c w" style="left:600.10px;top:206.62px;width:44.70px;height:15.79px;"><div style="left:16.6px;top:2.3px;width:11px;height:11px;border:1px solid #a4a4a4;background:linear-gradient(135deg,#dcdcdc,#fafafa)"></div></div>
<div class="c g" style="left:645.80px;top:206.62px;width:62.30px;height:15.79px;"></div>
<div class="c w" style="left:709.10px;top:206.62px;width:47.10px;height:15.79px;"></div>
<div class="c hd" style="left:1.50px;top:223.41px;width:35.50px;height:15.79px;"><div class="t" style="left:12px;top:3px;"><span style="font-size:9.1px;letter-spacing:-0.12px;position:relative;top:-1px">13</span></div></div>
<div class="c lb" style="left:38.00px;top:223.41px;width:56.80px;height:15.79px;"><div class="t" style="left:5px;top:2px;"><span style="font-size:9.1px;letter-spacing:-0.12px;position:relative;top:-1px">DP 18</span></div></div>
<div class="c w" style="left:95.80px;top:223.41px;width:66.70px;height:15.79px;"><div class="t" style="left:7px;top:2px;"><span style="font-size:9.1px;letter-spacing:-0.12px;position:relative;top:-1px">19</span></div></div>
<div class="c w" style="left:163.50px;top:223.41px;width:78.80px;height:15.79px;"><div class="t" style="left:6px;top:2px;"><span style="font-size:9.1px;letter-spacing:-0.12px;position:relative;top:-1px">0.34</span></div></div>
<div class="c w" style="left:243.30px;top:223.41px;width:88.90px;height:15.79px;"><div class="t" style="left:6px;top:2px;"><span style="font-size:9.1px;letter-spacing:-0.12px;position:relative;top:-1px">2.5E+09</span></div></div>
<div class="c g" style="left:333.20px;top:223.41px;width:128.80px;height:15.79px;"><svg style="position:absolute;left:6px;top:2.5px" width="10" height="10" viewBox="0 0 10 10"><path d="M5.5 0.4L1.6 5.4h2.8L1 9.7l7-5.8H5.3L8.6 0.4z" fill="#f4c040" stroke="#b88020" stroke-width="0.7" stroke-linejoin="round"/><path d="M5.8 1.2L3 4.6h2" stroke="#fff0a0" stroke-width="0.8" fill="none"/></svg><div class="t" style="left:22px;top:2px;"><span style="font-size:9.1px;letter-spacing:-0.12px;position:relative;top:-1px">-4.9572E-08</span></div></div>
<div class="c g" style="left:463.00px;top:223.41px;width:136.10px;height:15.79px;"><svg style="position:absolute;left:6px;top:2.5px" width="10" height="10" viewBox="0 0 10 10"><path d="M5.5 0.4L1.6 5.4h2.8L1 9.7l7-5.8H5.3L8.6 0.4z" fill="#f4c040" stroke="#b88020" stroke-width="0.7" stroke-linejoin="round"/><path d="M5.8 1.2L3 4.6h2" stroke="#fff0a0" stroke-width="0.8" fill="none"/></svg></div>
<div class="c w" style="left:600.10px;top:223.41px;width:44.70px;height:15.79px;"><div style="left:16.6px;top:2.3px;width:11px;height:11px;border:1px solid #a4a4a4;background:linear-gradient(135deg,#dcdcdc,#fafafa)"></div></div>
<div class="c g" style="left:645.80px;top:223.41px;width:62.30px;height:15.79px;"></div>
<div class="c w" style="left:709.10px;top:223.41px;width:47.10px;height:15.79px;"></div>
<div class="c hd" style="left:1.50px;top:240.20px;width:35.50px;height:15.79px;"><div class="t" style="left:12px;top:3px;"><span style="font-size:9.1px;letter-spacing:-0.12px;position:relative;top:-1px">14</span></div></div>
<div class="c lb" style="left:38.00px;top:240.20px;width:56.80px;height:15.79px;"><div class="t" style="left:5px;top:2px;"><span style="font-size:9.1px;letter-spacing:-0.12px;position:relative;top:-1px">DP 19</span></div></div>
<div class="c w" style="left:95.80px;top:240.20px;width:66.70px;height:15.79px;"><div class="t" style="left:7px;top:2px;"><span style="font-size:9.1px;letter-spacing:-0.12px;position:relative;top:-1px">20</span></div></div>
<div class="c w" style="left:163.50px;top:240.20px;width:78.80px;height:15.79px;"><div class="t" style="left:6px;top:2px;"><span style="font-size:9.1px;letter-spacing:-0.12px;position:relative;top:-1px">0.29</span></div></div>
<div class="c w" style="left:243.30px;top:240.20px;width:88.90px;height:15.79px;"><div class="t" style="left:6px;top:2px;"><span style="font-size:9.1px;letter-spacing:-0.12px;position:relative;top:-1px">2.5E+09</span></div></div>
<div class="c g" style="left:333.20px;top:240.20px;width:128.80px;height:15.79px;"><svg style="position:absolute;left:6px;top:2.5px" width="10" height="10" viewBox="0 0 10 10"><path d="M5.5 0.4L1.6 5.4h2.8L1 9.7l7-5.8H5.3L8.6 0.4z" fill="#f4c040" stroke="#b88020" stroke-width="0.7" stroke-linejoin="round"/><path d="M5.8 1.2L3 4.6h2" stroke="#fff0a0" stroke-width="0.8" fill="none"/></svg><div class="t" style="left:22px;top:2px;"><span style="font-size:9.1px;letter-spacing:-0.12px;position:relative;top:-1px">-4.958E-08</span></div></div>
<div class="c g" style="left:463.00px;top:240.20px;width:136.10px;height:15.79px;"><svg style="position:absolute;left:6px;top:2.5px" width="10" height="10" viewBox="0 0 10 10"><path d="M5.5 0.4L1.6 5.4h2.8L1 9.7l7-5.8H5.3L8.6 0.4z" fill="#f4c040" stroke="#b88020" stroke-width="0.7" stroke-linejoin="round"/><path d="M5.8 1.2L3 4.6h2" stroke="#fff0a0" stroke-width="0.8" fill="none"/></svg></div>
<div class="c w" style="left:600.10px;top:240.20px;width:44.70px;height:15.79px;"><div style="left:16.6px;top:2.3px;width:11px;height:11px;border:1px solid #a4a4a4;background:linear-gradient(135deg,#dcdcdc,#fafafa)"></div></div>
<div class="c g" style="left:645.80px;top:240.20px;width:62.30px;height:15.79px;"></div>
<div class="c w" style="left:709.10px;top:240.20px;width:47.10px;height:15.79px;"></div>
<div class="c hd" style="left:1.50px;top:256.99px;width:35.50px;height:15.79px;"><div class="t" style="left:12px;top:3px;"><span style="font-size:9.1px;letter-spacing:-0.12px;position:relative;top:-1px">15</span></div></div>
<div class="c lb" style="left:38.00px;top:256.99px;width:56.80px;height:15.79px;"><div class="t" style="left:5px;top:2px;"><span style="font-size:9.1px;letter-spacing:-0.12px;position:relative;top:-1px">DP 20</span></div></div>
<div class="c w" style="left:95.80px;top:256.99px;width:66.70px;height:15.79px;"><div class="t" style="left:7px;top:2px;"><span style="font-size:9.1px;letter-spacing:-0.12px;position:relative;top:-1px">21</span></div></div>
<div class="c w" style="left:163.50px;top:256.99px;width:78.80px;height:15.79px;"><div class="t" style="left:6px;top:2px;"><span style="font-size:9.1px;letter-spacing:-0.12px;position:relative;top:-1px">0.24</span></div></div>
<div class="c w" style="left:243.30px;top:256.99px;width:88.90px;height:15.79px;"><div class="t" style="left:6px;top:2px;"><span style="font-size:9.1px;letter-spacing:-0.12px;position:relative;top:-1px">2.5E+09</span></div></div>
<div class="c g" style="left:333.20px;top:256.99px;width:128.80px;height:15.79px;"><svg style="position:absolute;left:6px;top:2.5px" width="10" height="10" viewBox="0 0 10 10"><path d="M5.5 0.4L1.6 5.4h2.8L1 9.7l7-5.8H5.3L8.6 0.4z" fill="#f4c040" stroke="#b88020" stroke-width="0.7" stroke-linejoin="round"/><path d="M5.8 1.2L3 4.6h2" stroke="#fff0a0" stroke-width="0.8" fill="none"/></svg><div class="t" style="left:22px;top:2px;"><span style="font-size:9.1px;letter-spacing:-0.12px;position:relative;top:-1px">-4.9589E-08</span></div></div>
<div class="c g" style="left:463.00px;top:256.99px;width:136.10px;height:15.79px;"><svg style="position:absolute;left:6px;top:2.5px" width="10" height="10" viewBox="0 0 10 10"><path d="M5.5 0.4L1.6 5.4h2.8L1 9.7l7-5.8H5.3L8.6 0.4z" fill="#f4c040" stroke="#b88020" stroke-width="0.7" stroke-linejoin="round"/><path d="M5.8 1.2L3 4.6h2" stroke="#fff0a0" stroke-width="0.8" fill="none"/></svg></div>
<div class="c w" style="left:600.10px;top:256.99px;width:44.70px;height:15.79px;"><div style="left:16.6px;top:2.3px;width:11px;height:11px;border:1px solid #a4a4a4;background:linear-gradient(135deg,#dcdcdc,#fafafa)"></div></div>
<div class="c g" style="left:645.80px;top:256.99px;width:62.30px;height:15.79px;"></div>
<div class="c w" style="left:709.10px;top:256.99px;width:47.10px;height:15.79px;"></div>
<div class="c hd" style="left:1.50px;top:273.78px;width:35.50px;height:15.79px;"><div class="t" style="left:12px;top:3px;"><span style="font-size:9.1px;letter-spacing:-0.12px;position:relative;top:-1px">16</span></div></div>
<div class="c lb" style="left:38.00px;top:273.78px;width:56.80px;height:15.79px;"><div class="t" style="left:5px;top:2px;"><span style="font-size:9.1px;letter-spacing:-0.12px;position:relative;top:-1px">DP 21</span></div></div>
<div class="c w" style="left:95.80px;top:273.78px;width:66.70px;height:15.79px;"><div class="t" style="left:7px;top:2px;"><span style="font-size:9.1px;letter-spacing:-0.12px;position:relative;top:-1px">22</span></div></div>
<div class="c w" style="left:163.50px;top:273.78px;width:78.80px;height:15.79px;"><div class="t" style="left:6px;top:2px;"><span style="font-size:9.1px;letter-spacing:-0.12px;position:relative;top:-1px">0.19</span></div></div>
<div class="c w" style="left:243.30px;top:273.78px;width:88.90px;height:15.79px;"><div class="t" style="left:6px;top:2px;"><span style="font-size:9.1px;letter-spacing:-0.12px;position:relative;top:-1px">2.5E+09</span></div></div>
<div class="c g" style="left:333.20px;top:273.78px;width:128.80px;height:15.79px;"><svg style="position:absolute;left:6px;top:2.5px" width="10" height="10" viewBox="0 0 10 10"><path d="M5.5 0.4L1.6 5.4h2.8L1 9.7l7-5.8H5.3L8.6 0.4z" fill="#f4c040" stroke="#b88020" stroke-width="0.7" stroke-linejoin="round"/><path d="M5.8 1.2L3 4.6h2" stroke="#fff0a0" stroke-width="0.8" fill="none"/></svg><div class="t" style="left:22px;top:2px;"><span style="font-size:9.1px;letter-spacing:-0.12px;position:relative;top:-1px">-4.9598E-08</span></div></div>
<div class="c g" style="left:463.00px;top:273.78px;width:136.10px;height:15.79px;"><svg style="position:absolute;left:6px;top:2.5px" width="10" height="10" viewBox="0 0 10 10"><path d="M5.5 0.4L1.6 5.4h2.8L1 9.7l7-5.8H5.3L8.6 0.4z" fill="#f4c040" stroke="#b88020" stroke-width="0.7" stroke-linejoin="round"/><path d="M5.8 1.2L3 4.6h2" stroke="#fff0a0" stroke-width="0.8" fill="none"/></svg></div>
<div class="c w" style="left:600.10px;top:273.78px;width:44.70px;height:15.79px;"><div style="left:16.6px;top:2.3px;width:11px;height:11px;border:1px solid #a4a4a4;background:linear-gradient(135deg,#dcdcdc,#fafafa)"></div></div>
<div class="c g" style="left:645.80px;top:273.78px;width:62.30px;height:15.79px;"></div>
<div class="c w" style="left:709.10px;top:273.78px;width:47.10px;height:15.79px;"></div>
<div class="c hd" style="left:1.50px;top:290.57px;width:35.50px;height:15.79px;"><div class="t" style="left:12px;top:3px;"><span style="font-size:9.1px;letter-spacing:-0.12px;position:relative;top:-1px">17</span></div></div>
<div class="c lb" style="left:38.00px;top:290.57px;width:56.80px;height:15.79px;"><div class="t" style="left:5px;top:2px;"><span style="font-size:9.1px;letter-spacing:-0.12px;position:relative;top:-1px">DP 22</span></div></div>
<div class="c w" style="left:95.80px;top:290.57px;width:66.70px;height:15.79px;"><div class="t" style="left:7px;top:2px;"><span style="font-size:9.1px;letter-spacing:-0.12px;position:relative;top:-1px">23</span></div></div>
<div class="c w" style="left:163.50px;top:290.57px;width:78.80px;height:15.79px;"><div class="t" style="left:6px;top:2px;"><span style="font-size:9.1px;letter-spacing:-0.12px;position:relative;top:-1px">0.14</span></div></div>
<div class="c w" style="left:243.30px;top:290.57px;width:88.90px;height:15.79px;"><div class="t" style="left:6px;top:2px;"><span style="font-size:9.1px;letter-spacing:-0.12px;position:relative;top:-1px">2.5E+09</span></div></div>
<div class="c g" style="left:333.20px;top:290.57px;width:128.80px;height:15.79px;"><svg style="position:absolute;left:6px;top:2.5px" width="10" height="10" viewBox="0 0 10 10"><path d="M5.5 0.4L1.6 5.4h2.8L1 9.7l7-5.8H5.3L8.6 0.4z" fill="#f4c040" stroke="#b88020" stroke-width="0.7" stroke-linejoin="round"/><path d="M5.8 1.2L3 4.6h2" stroke="#fff0a0" stroke-width="0.8" fill="none"/></svg><div class="t" style="left:22px;top:2px;"><span style="font-size:9.1px;letter-spacing:-0.12px;position:relative;top:-1px">-4.9607E-08</span></div></div>
<div class="c g" style="left:463.00px;top:290.57px;width:136.10px;height:15.79px;"><svg style="position:absolute;left:6px;top:2.5px" width="10" height="10" viewBox="0 0 10 10"><path d="M5.5 0.4L1.6 5.4h2.8L1 9.7l7-5.8H5.3L8.6 0.4z" fill="#f4c040" stroke="#b88020" stroke-width="0.7" stroke-linejoin="round"/><path d="M5.8 1.2L3 4.6h2" stroke="#fff0a0" stroke-width="0.8" fill="none"/></svg></div>
<div class="c w" style="left:600.10px;top:290.57px;width:44.70px;height:15.79px;"><div style="left:16.6px;top:2.3px;width:11px;height:11px;border:1px solid #a4a4a4;background:linear-gradient(135deg,#dcdcdc,#fafafa)"></div></div>
<div class="c g" style="left:645.80px;top:290.57px;width:62.30px;height:15.79px;"></div>
<div class="c w" style="left:709.10px;top:290.57px;width:47.10px;height:15.79px;"></div>
<div style="left:0.50px;top:0.50px;width:1px;height:306.86px;background:#8c8c8c"></div>
<div style="left:37.00px;top:0.50px;width:1px;height:306.86px;background:#8c8c8c"></div>
<div style="left:94.80px;top:0.50px;width:1px;height:306.86px;background:#8c8c8c"></div>
<div style="left:162.50px;top:0.50px;width:1px;height:306.86px;background:#8c8c8c"></div>
<div style="left:242.30px;top:0.50px;width:1px;height:306.86px;background:#8c8c8c"></div>
<div style="left:332.20px;top:0.50px;width:1px;height:306.86px;background:#8c8c8c"></div>
<div style="left:462.00px;top:0.50px;width:1px;height:306.86px;background:#8c8c8c"></div>
<div style="left:599.10px;top:0.50px;width:1px;height:306.86px;background:#8c8c8c"></div>
<div style="left:644.80px;top:0.50px;width:1px;height:306.86px;background:#8c8c8c"></div>
<div style="left:708.10px;top:0.50px;width:1px;height:306.86px;background:#8c8c8c"></div>
<div style="left:756.20px;top:0.50px;width:1px;height:306.86px;background:#8c8c8c"></div>
<div style="left:0.50px;top:19.90px;width:756.70px;height:1px;background:#8c8c8c"></div>
<div style="left:0.50px;top:39.10px;width:756.70px;height:1px;background:#8c8c8c"></div>
<div style="left:0.50px;top:54.90px;width:756.70px;height:1px;background:#8c8c8c"></div>
<div style="left:0.50px;top:71.30px;width:756.70px;height:1px;background:#8c8c8c"></div>
<div style="left:0.50px;top:88.09px;width:756.70px;height:1px;background:#8c8c8c"></div>
<div style="left:0.50px;top:104.88px;width:756.70px;height:1px;background:#8c8c8c"></div>
<div style="left:0.50px;top:121.67px;width:756.70px;height:1px;background:#8c8c8c"></div>
<div style="left:0.50px;top:138.46px;width:756.70px;height:1px;background:#8c8c8c"></div>
<div style="left:0.50px;top:155.25px;width:756.70px;height:1px;background:#8c8c8c"></div>
<div style="left:0.50px;top:172.04px;width:756.70px;height:1px;background:#8c8c8c"></div>
<div style="left:0.50px;top:188.83px;width:756.70px;height:1px;background:#8c8c8c"></div>
<div style="left:0.50px;top:205.62px;width:756.70px;height:1px;background:#8c8c8c"></div>
<div style="left:0.50px;top:222.41px;width:756.70px;height:1px;background:#8c8c8c"></div>
<div style="left:0.50px;top:239.20px;width:756.70px;height:1px;background:#8c8c8c"></div>
<div style="left:0.50px;top:255.99px;width:756.70px;height:1px;background:#8c8c8c"></div>
<div style="left:0.50px;top:272.78px;width:756.70px;height:1px;background:#8c8c8c"></div>
<div style="left:0.50px;top:289.57px;width:756.70px;height:1px;background:#8c8c8c"></div>
<div style="left:0.50px;top:306.36px;width:756.70px;height:1px;background:#8c8c8c"></div>
</div>
</body></html>
